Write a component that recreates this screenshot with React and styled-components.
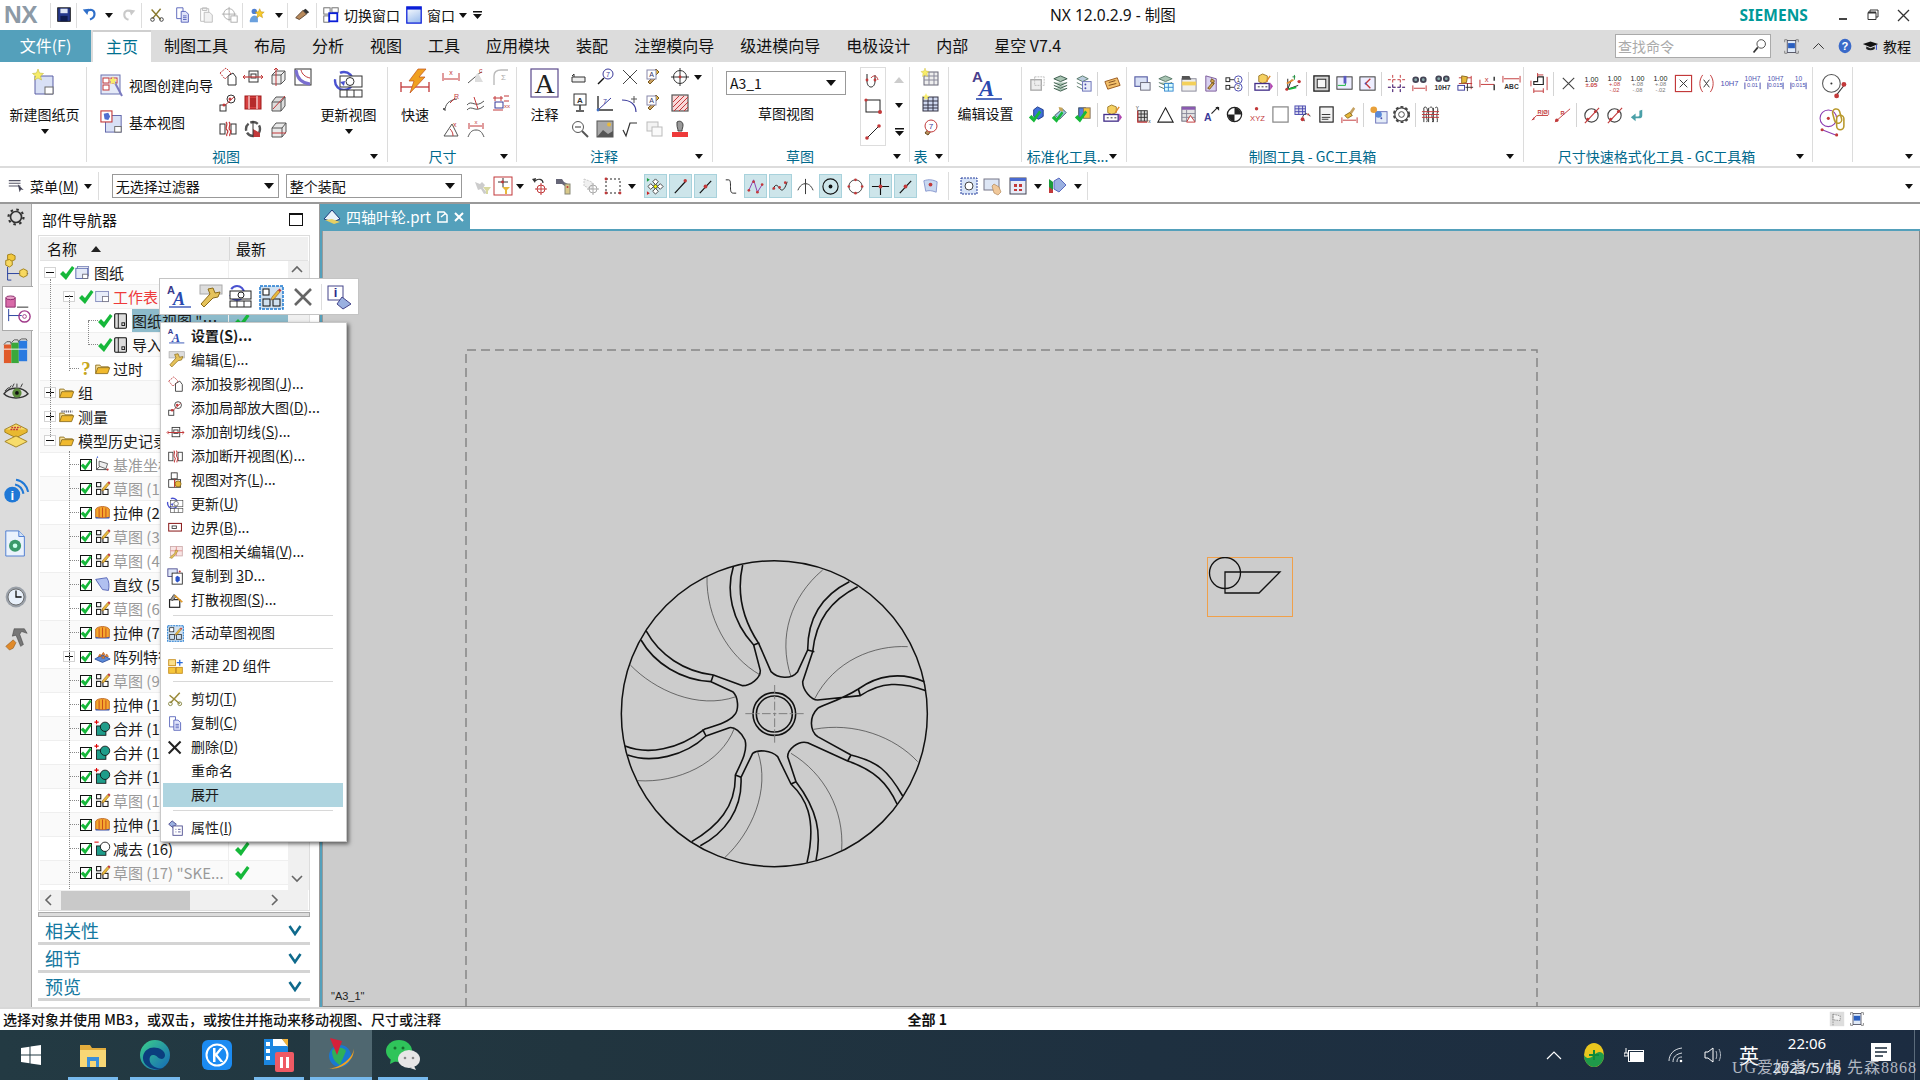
import React from 'react';
import styled, { createGlobalStyle } from 'styled-components';

const FONT = `"Noto Sans CJK SC","Noto Sans",sans-serif`;
const Global = createGlobalStyle`
  html,body{margin:0;padding:0;background:#fff;}
  body{font-family:${FONT};color:#111;font-size:14px;overflow:hidden;}
  #root{width:1920px;height:1080px;}
  *{box-sizing:border-box;}
`;

const R = '#c2393a', B = '#4b4fb0', K = '#333', BL = '#3f6fc4', Y = '#e8b93a', GN = '#16b83a', TL = '#1f9d8a', OR = '#e5892b';
const Tx = ({ x, y, s = 6, c = R, b, t, a = 'start', f = 'Liberation Sans', i }) => (
  <text x={x} y={y} fontSize={s} fill={c} fontWeight={b ? 700 : 400} textAnchor={a} fontFamily={f} fontStyle={i ? 'italic' : 'normal'}>{t}</text>
);
const L = ({ d, c = K, w = 1, f = 'none' }) => <path d={d} stroke={c} strokeWidth={w} fill={f} />;
const Dot = ({ x, y, r = 1.4, c = R }) => <circle cx={x} cy={y} r={r} fill={c} />;
const Tick = ({ x = 0, y = 0, k = 1 }) => <path transform={`translate(${x} ${y}) scale(${k})`} d="M1 9l3-3 3 3 6-8 2.500 2-8.500 12z" fill={GN} />;
const Pencil = ({ x = 0, y = 0 }) => <g transform={`translate(${x} ${y})`}><path d="M1 9l6-7 2 2-6 7-3 1z" fill={Y} stroke="#8a5a20" strokeWidth=".6" /><path d="M7 2l1.5-1.5 2 2L9 4z" fill={R} /></g>;
const Folder = ({ extra }) => <g><path d="M2 16V6h5l1.5 2H17v2" stroke="#8a6a1a" fill="#f7e3a0" /><path d="M2 16l2.5-7h14l-2.5 7z" fill="#f0b92e" stroke="#8a6a1a" />{extra}</g>;
const Sketch = () => <g><rect x="3" y="3" width="5" height="5" stroke="#111" strokeWidth="1.2" fill="#fff" /><rect x="3" y="11" width="5" height="6" stroke="#111" strokeWidth="1.2" fill="#fff" /><rect x="10.5" y="11" width="6" height="6" stroke="#111" strokeWidth="1.2" fill="#fff" /><Pencil x="9" y="1" /></g>;

const num = (a, b, c = R) => <g><Tx x="10" y="8" a="middle" t={a} s={7.5} c="#222" /><Tx x="10" y="14" a="middle" t={b} s={6.5} c={c} b /></g>;
const tol = (a, b, d, c = R) => <g><Tx x="10" y="7" a="middle" t={a} s={7.5} c="#222" /><Tx x="10" y="13" a="middle" t={b} s={6} c={c} /><Tx x="10" y="18.500" a="middle" t={d} s={6} c={c} /></g>;
const fit = (a, b) => <g><Tx x="10" y="7" a="middle" t={a} s={7} c={B} /><Tx x="10" y="14" a="middle" t={b} s={6} c={B} /><L d="M2 9v7M18 9v7" c={B} /></g>;

const ICONS = {
  tick: <Tick k={1} />,
  t105: num('1.00', '±.05'),
  t108: tol('1.00', '+.08', '-.02'),
  t105g: tol('1.00', '+.08', '-.08', '#777'),
  t108g: tol('1.00', '+.08', '-.02', '#777'),
  t10h7: <Tx x="10" y="13" a="middle" t="10H7" s={8} c={B} />,
  t10h7b: fit('10H7', '0.01'),
  t10h7c: fit('10H7', '0.015'),
  t10b: fit('10', '0.015'),
  save: <g><rect x="3" y="2" width="14" height="15" fill="#26398c" stroke="#111" /><rect x="6" y="3" width="8" height="5" fill="#dfe6f5" /><rect x="6" y="11" width="8" height="6" fill="#0f1c50" /></g>,
  undo: <g><path d="M6 6c4-3 9-2 9 3 0 3-2 5-5 6" stroke="#2f6fc9" strokeWidth="2.4" /><path d="M2 4l7-1-2 7z" fill="#2f6fc9" /></g>,
  redo: <g><path d="M14 6c-4-3-9-2-9 3 0 3 2 5 5 6" stroke="#c9c9c9" strokeWidth="2.4" /><path d="M18 4l-7-1 2 7z" fill="#c9c9c9" /></g>,
  cut: <g><L d="M4 4l10 11M14 3L5 14" c="#8a7a30" w="1.6" /><circle cx="5" cy="15" r="2" stroke="#333" /><circle cx="15" cy="15" r="2" stroke="#333" /></g>,
  copy: <g><path d="M3 2h7v12H3z" fill="#fff" stroke="#5360b8" /><path d="M8 6h5l3 3v9H8z" fill="#dfe3fa" stroke="#5360b8" /><L d="M10 11h4M10 13h4M10 15h4" c="#5360b8" /></g>,
  paste: <g><path d="M4 3h9v14H4z" fill="#fff" stroke="#bbb" /><path d="M8 7h6l3 3v8H8z" fill="#f2f2f2" stroke="#bbb" /><L d="M6 2h5v3H6z" c="#bbb" /></g>,
  snap: <g><circle cx="9" cy="9" r="6" stroke="#aaa" /><L d="M9 1v16M1 9h16" c="#aaa" /><rect x="11" y="11" width="7" height="7" fill="#fff" stroke="#aaa" /></g>,
  star: <g><circle cx="7" cy="6" r="3" fill="#4f7fd0" /><path d="M2 16c1-6 7-7 9-3v5H2z" fill="#6aa0dd" /><path d="M13 3l1.5 3.5 3.5.3-2.7 2.4.9 3.8-3.2-2-3.2 2 .9-3.8L8 6.800l3.500-.3z" fill="#f7c92a" stroke="#b98b10" strokeWidth=".5" /></g>,
  brush: <g><path d="M3 13l8-8 4 4-8 6z" fill="#b88a5c" stroke="#5a4028" /><path d="M11 5l3-2 4 4-3 2z" fill="#333" /></g>,
  switchWin: <g><rect x="2" y="2" width="7" height="7" stroke="#666" /><rect x="2" y="11" width="6" height="7" stroke="#666" /><rect x="11" y="2" width="7" height="5" stroke="#666" /><rect x="8" y="8" width="9" height="9" stroke="#0a1ed8" strokeWidth="2" fill="#fff" /></g>,
  winIcon: <g><rect x="2" y="1" width="16" height="18" stroke="#0a1ed8" strokeWidth="1.4" fill="url(#winG)" /><rect x="2" y="1" width="16" height="3" fill="#0a1ed8" /></g>,
  newSheet: <g><path d="M5 8h18v18H5z" fill="#d8e0f5" stroke="#5a5fa5" /><rect x="15" y="19" width="8" height="7" fill="#fff" stroke="#6a6a6a" /><path d="M8 1l1.500 4 4 .5-3 2.500 1 4-3.500-2-3.500 2 1-4-3-2.500 4-.5z" fill="#f6ec6a" stroke="#c5b93a" strokeWidth=".6" /></g>,
  wizard: <g><rect x="1" y="2" width="19" height="19" fill="#e4e9f7" stroke="#6a72b0" /><rect x="3" y="5" width="6" height="5" stroke={R} fill="#fff" /><rect x="11" y="5" width="6" height="5" stroke={R} fill="#fff" /><rect x="3" y="12" width="6" height="5" stroke={R} fill="#fff" /><path d="M14 8l8 15" stroke="#7a7ac0" strokeWidth="2" /><path d="M13 3l1 3 3 .5-2.200 2 .8 3-2.600-1.500-2.500 1.500.6-3-2.200-2 3-.5z" fill="#f7ec6a" /></g>,
  baseView: <g><rect x="6" y="6" width="17" height="18" fill="#d8e0f5" stroke="#5a5fa5" /><rect x="16" y="18" width="7" height="6" fill="#fff" stroke="#666" /><rect x="1" y="1" width="12" height="12" fill="#fff" stroke={R} strokeWidth="1.2" /><path d="M4 4l5-1 2 4-2 4-4-1z" fill="#4f6fd0" /></g>,
  projView: <g><path d="M2 6l6-5 5 5-6 6z" fill="#fff" stroke={R} strokeDasharray="2 1" /><path d="M10 9l5-3 3 4v8H10z" fill="#fff" stroke="#333" /></g>,
  sectLine: <g><rect x="6" y="4" width="9" height="11" fill="#fff" stroke="#333" /><rect x="8" y="7" width="5" height="4" stroke="#333" /><L d="M1 10h19" c={R} w="1.2" /><path d="M2 8l-2 2 2 2M18 8l2 2-2 2" stroke={R} /></g>,
  box3: <g><path d="M4 8h9v9H4zM4 8l4-4h9v9l-4 4M13 8l4-4" fill="#eee" stroke="#555" /><L d="M8 1v18" c={R} /><path d="M6 3l2-2 2 2" stroke={R} /></g>,
  gridBlue: <g><rect x="2" y="2" width="16" height="16" fill="#fff" stroke="#333" /><path d="M3 3c1 9 6 13 14 14" stroke="#7a6fd0" strokeWidth="3" fill="none" /><path d="M8 3c1 4 4 7 9 8" stroke={R} strokeWidth="1" /></g>,
  localV: <g><circle cx="13" cy="6" r="4" fill="#fff" stroke="#333" /><L d="M3 16L16 4" c={R} /><rect x="2" y="12" width="6" height="6" fill="#fff" stroke="#333" /><Dot x="12" y="6" r="1.500" /><Dot x="6" y="12" r="1.500" /></g>,
  redFilm: <g><rect x="2" y="3" width="16" height="13" fill="#d64040" stroke="#a01818" /><L d="M6 3v13M14 3v13" c="#fff" /><rect x="7" y="5" width="6" height="9" fill="#b52a2a" /></g>,
  box3b: <g><path d="M4 9h9v9H4zM4 9l4-5h9v9l-4 5M13 9l4-5" fill="#ddd" stroke="#555" /><path d="M5 16L17 3" stroke={R} /></g>,
  breakV: <g><rect x="2" y="5" width="5" height="10" fill="#fff" stroke="#333" /><rect x="13" y="5" width="5" height="10" fill="#fff" stroke="#333" /><path d="M8 3c3 3-2 6 1 8s-2 4 0 6M11 3c3 3-2 6 1 8s-2 4 0 6" stroke={R} strokeWidth="1.2" /></g>,
  revolve: <g><circle cx="10" cy="10" r="7" fill="none" stroke="#555" strokeWidth="2.4" strokeDasharray="8 2" /><path d="M10 10l7 4v4H10z" fill={R} /><L d="M10 2v16" /></g>,
  box3c: <g><path d="M4 9h10v9H4zM4 9l4-5h10v9l-4 5M14 9l4-5" fill="#eaeaea" stroke="#555" /><L d="M4 14h14" c={R} /></g>,
  update: <g><circle cx="10" cy="13" r="9" stroke="#4a52d0" strokeWidth="2.400" strokeDasharray="30 8" /><rect x="6" y="8" width="22" height="11" fill="#fff" stroke="#333" /><circle cx="16" cy="13.500" r="4" fill="#fff" stroke="#333" /><rect x="6" y="22" width="22" height="7" fill="#fff" stroke="#333" /><L d="M13 22v7M20 22v7" /><path d="M6 14l4 4 1-5z" fill="#4a52d0" /></g>,
  quick: <g><L d="M1 19h28" c={R} w="1.300" /><L d="M1 14v10M29 14v10" c={R} w="1.300" /><path d="M18 1h8l-7 8h6L10 25l4-12H9z" fill="#f0a020" stroke="#c0501a" strokeWidth=".7" /></g>,
  dimX: <g><L d="M2 6v8M18 6v8M3 12h14" c={R} /><Tx x="10" y="8" a="middle" t="x" s={7} /></g>,
  conicC: <g><path d="M2 16l7-6c2-2 4-4 7-5" stroke="#555" /><path d="M9 12c0-3 1-5 3-6l5 9H9z" fill="#ddd" /><Tx x="13" y="6" t="c" s={7} /></g>,
  sumFrame: <g><path d="M3 18V9c0-4 3-6 7-6h7" stroke="#bbb" strokeWidth="1.400" /><Tx x="10" y="13" t="Σ" s={8} c="#aaa" /></g>,
  radial: <g><path d="M4 18c0-7 4-11 12-12" stroke="#555" /><L d="M9 10l5-5" c={R} /><Tx x="13" y="6" t="R" s={7} /><Dot x="3" y="16" r="1" c="#333" /></g>,
  curveD: <g><path d="M1 12c5-6 8 4 17-4M1 17c5-6 8 4 17-4" stroke="#555" /><L d="M8 4l4 12" c={R} /></g>,
  chain: <g><L d="M4 3v5M10 3v5M2 5h10" c={R} /><L d="M13 3h5M13 8h5" c={R} /><rect x="4" y="9" width="8" height="6" stroke="#3a3a9a" /><Tx x="13" y="15" t="xx" s={6} /><L d="M2 17h10" c={R} /></g>,
  angleD: <g><L d="M3 17h14L11 5z" c="#555" /><path d="M9 10c2 2 3 4 3 7" stroke={R} /><Tx x="12" y="8" t="x" s={7} /></g>,
  arcD: <g><L d="M3 4v6M17 4v6M4 7h12" c={R} /><path d="M2 18c2-5 4-7 8-7s6 2 8 7" stroke="#555" /><Tx x="10" y="5" a="middle" t="x" s={6} /></g>,
  bigA: <g><rect x="1" y="1" width="27" height="28" fill="#fff" stroke="#5b4a8c" strokeWidth="1.200" /><Tx x="14.500" y="25" a="middle" t="A" s={28} c="#222" f="Liberation Serif" /></g>,
  leader: <g><path d="M2 10h13v5H2z" fill="#eee" stroke="#333" /><L d="M2 9l2-2v3" /></g>,
  balloon: <g><circle cx="13" cy="7" r="5" fill="#fff" stroke="#3a3a9a" /><Tx x="13" y="9.500" a="middle" t="7" s={7} c="#3a3a9a" /><L d="M9 11L3 17" c="#111" w="1.400" /></g>,
  xThin: <L d="M3 3l14 14M17 3L3 17" c="#444" />,
  tool: <g><path d="M3 15l6-6 2 2-6 6z" fill="#c9a060" stroke="#7a5a20" /><path d="M8 5l3-3 3 3-3 3z" fill={Y} stroke="#7a5a20" /><rect x="2" y="3" width="9" height="9" fill="#fff" stroke="#88a" /><Tx x="6.500" y="10" a="middle" t="A" s={7} c="#336" /></g>,
  crossC: <g><circle cx="10" cy="10" r="6.500" stroke="#333" /><L d="M10 1v18M1 10h18" c="#333" /><Dot x="10" y="10" c={R} /></g>,
  aStand: <g><rect x="4" y="1" width="12" height="11" fill="#fff" stroke="#333" /><Tx x="10" y="9.500" a="middle" t="A" s={8} c="#333" b /><L d="M10 12v5M6 18h8" w="1.500" /></g>,
  angleT: <g><L d="M3 3v14h15" c="#333" w="1.400" /><path d="M3 17L16 5" stroke="#3a3a9a" /><Tx x="8" y="11" t="7" s={7} c="#3a3a9a" /><Dot x="3" y="17" c={BL} /></g>,
  curveT: <g><path d="M2 7c9 0 14 5 14 12" stroke="#3a3a9a" strokeWidth="1.200" /><L d="M14 3v7M11 6h6" c="#555" /></g>,
  zoomG: <g><circle cx="8" cy="8" r="5.500" stroke="#555" fill="#fff" /><L d="M5 8h6" /><L d="M12 12l6 6" c="#555" w="2" /></g>,
  imgT: <g><rect x="2" y="2" width="16" height="16" fill="#a9a9a9" stroke="#555" /><path d="M2 18l6-7 5 4 5-3v6z" fill="#555" /><circle cx="14" cy="5.500" r="2" fill={Y} /></g>,
  sqrtT: <L d="M3 11l3 6 4-13h7" c="#333" w="1.200" />,
  grayCopy: <g><rect x="2" y="3" width="11" height="9" stroke="#bbb" fill="#f3f3f3" /><rect x="7" y="8" width="10" height="9" stroke="#bbb" fill="#fafafa" /></g>,
  stamp: <g><path d="M7 3c3-2 6 0 6 3s-1 3-1 6H8c0-3-1-3-1-6z" fill="#999" stroke="#444" /><rect x="2" y="13" width="16" height="5" fill="#ee3a3a" /></g>,
  hatchR: <g><rect x="2" y="2" width="16" height="16" fill="#f9d8d8" stroke="#555" strokeWidth="1.200" /><path d="M3 9l6-6M3 14l11-11M4 18L18 4M9 18l9-9M14 18l4-4" stroke={R} /></g>,
  sketchSpline: <g><L d="M4 3v7c0 8 8 8 8 0V4" c="#222" /><Dot x="4" y="9" /><Dot x="12" y="9" /><path d="M8 7c2-3 6-3 7 2" stroke={R} /></g>,
  rectS: <g><rect x="3" y="4" width="14" height="12" stroke="#222" /><Dot x="17" y="16" r="2" /><Dot x="3" y="4" r="1.600" /></g>,
  lineS: <g><L d="M4 16L16 4" c="#222" /><Dot x="16" y="4" r="1.800" /><Dot x="4" y="16" r="1.800" /></g>,
  tableNew: <g><rect x="4" y="5" width="14" height="13" fill="#eee" stroke="#667" /><path d="M4 9h14M4 13h14M9 5v13M14 5v13" stroke="#889" /><path d="M5 1l1 3 3 .5-2 2 .5 3L5 8 2.500 9.500 3 6.500l-2-2 3-.5z" fill="#f7ec6a" stroke="#c9b93a" strokeWidth=".4" /></g>,
  tableN2: <g><rect x="3" y="4" width="15" height="14" fill="#cfd8f0" stroke="#334" /><path d="M3 8h15M3 12h15M3 15h15M8 4v14M13 4v14" stroke="#334" /><path d="M6 0l1 2.500 2.500.5-2 1.500.5 2.500L6 5.500 4 7l.5-2.500-2-1.500L5 2.500z" fill="#f7ec6a" /></g>,
  wrenchQ: <g><path d="M5 14l7-9 3 2-7 9z" fill="#b8905a" stroke="#6a4a20" /><circle cx="11" cy="7" r="6" fill="#fff" stroke={R} /><Tx x="11" y="10" a="middle" t="7" s={8} c="#3a3a9a" /></g>,
  aaBig: <g><Tx x="2" y="14" t="A" s={15} c="#4a3f8c" b /><Tx x="9" y="28" t="A" s={23} c="#2a4ab0" b i f="Liberation Serif" /><L d="M6 31h26" c="#2a4ab0" w="1.600" /></g>,
  grayNodes: <g><rect x="3" y="6" width="11" height="11" stroke="#aaa" strokeWidth="1.400" fill="#eee" /><rect x="7" y="3" width="10" height="9" stroke="#bbb" strokeDasharray="2 1" /></g>,
  stackG: <g><path d="M3 5l7-3 7 3-7 3zM3 9l7 3 7-3M3 12l7 3 7-3M3 15l7 3 7-3" stroke="#3a5a4a" fill="#a8c4b2" /></g>,
  stackDoc: <g><path d="M3 5l6-3 6 3-6 3zM3 9l6 3M3 13l6 3" stroke="#5a7a6a" fill="#bcd" /><rect x="9" y="8" width="9" height="10" fill="#e8ecf8" stroke="#6a72b8" /><Dot x="12" y="11" r="1" c={B} /><Dot x="12" y="15" r="1" c={B} /></g>,
  tag: <g><path d="M2 8l13-4 3 8-13 4z" fill="#f3c06a" stroke="#9a5a20" /><L d="M6 9l7-2M6 12l8-2" c="#7a4a20" /></g>,
  blueChk: <g><path d="M6 5l4-3 6 3v7l-5 3-5-3z" fill="#3f6fd8" stroke="#1f3a8a" /><Tick x="0" y="5" k=".9" /></g>,
  toolChk: <g><path d="M4 11l8-7 4 4-7 7z" fill="#9ac8e0" stroke="#456" /><path d="M8 2l4 1 1 4-4-1z" fill="#c6a55a" /><Tick x="0" y="6" k=".85" /></g>,
  yellowChk: <g><rect x="5" y="3" width="7" height="10" fill="#4f7fe0" stroke="#345" /><rect x="10" y="3" width="7" height="11" fill="#f3c23a" stroke="#876" /><Tick x="0" y="5" k=".9" /></g>,
  cubeBar: <g><path d="M5 2l4-2 5 2v6l-5 2-4-2z" fill="#f5d060" stroke="#a08030" /><rect x="1" y="10" width="15" height="7" fill="#fff" stroke="#44308a" strokeWidth="1.400" /><path d="M4 13.500h2M8 13.500h2M12 13.500h2" stroke="#333" /><path d="M17 9l3 4-3 4z" fill="#b044b0" /><L d="M13 8l4-6" c="#e08a2a" w="1.500" /></g>,
  winBox: <g><rect x="2" y="3" width="13" height="10" fill="#d8e0f5" stroke="#5a5fa5" strokeWidth="1.200" /><rect x="8" y="9" width="10" height="8" fill="#e8edf9" stroke="#6a6a7a" /></g>,
  stackT: <g><path d="M3 5l7-3 7 3-7 3zM3 9l7 3 7-3M3 13l7 3" stroke="#5a7a6a" fill="#a8c4b2" /><rect x="9" y="10" width="9" height="8" fill="#dff" stroke="#3a8ad0" /><L d="M9 14h9M13 10v8" c="#3a8ad0" /></g>,
  tableBin: <g><rect x="3" y="5" width="15" height="13" fill="#eee" stroke="#889" /><rect x="3" y="8" width="15" height="4" fill="#f3d05a" /><path d="M3 2h8l2 4H3z" fill="#555" /></g>,
  wrenchV: <g><path d="M4 2l11 3v13L4 18z" fill="#d8d0f0" stroke="#7a5a9a" /><path d="M6 15l5-6 2 1-5 6zM10 5l3 2-1 3-3-2z" fill="#d6a850" stroke="#7a5a20" /></g>,
  ballots: <g><rect x="1" y="4" width="4" height="4" stroke="#222" /><rect x="1" y="12" width="4" height="4" stroke="#222" /><L d="M5 6h5M5 14h5" /><circle cx="14" cy="6" r="4" fill="#fff" stroke="#4a4ab0" /><circle cx="14" cy="14" r="4" fill="#fff" stroke="#4a4ab0" /><Tx x="14" y="8" a="middle" t="1" s={6} c="#333" /><Tx x="14" y="16" a="middle" t="2" s={6} c="#333" /></g>,
  csysC: <g><L d="M5 16l11-4M5 16V5M5 16l4-10" c="#222" /><path d="M4 10l7-4" stroke={OR} strokeWidth="1.800" /><path d="M6 16l8-2" stroke={GN} strokeWidth="1.800" /><Dot x="4" y="16" r="1.600" /><Dot x="17" y="8" r="1.800" /><path d="M10 3h3M12 1v5" stroke="#1a8a3a" /></g>,
  frameH: <g><rect x="2" y="2" width="16" height="16" fill="#d6d6d6" stroke="#222" strokeWidth="1.400" /><rect x="5.500" y="5.500" width="9" height="9" fill="#f8f8f8" stroke="#222" /></g>,
  boxPin: <g><rect x="2" y="3" width="16" height="13" fill="#eef" stroke="#333" /><L d="M3 12h8v-4" c={GN} /><rect x="9" y="2" width="3" height="8" fill="#5a5ac0" /></g>,
  boxC: <g><rect x="2" y="3" width="16" height="14" fill="#eef" stroke="#333" /><path d="M13 5l-5 5 5 5" stroke={R} strokeWidth="1.400" /><Dot x="8" y="10" r="1" c={B} /></g>,
  gridDash: <g><path d="M6 1v18M14 1v18M1 6h18M1 14h18" stroke={R} strokeDasharray="3 2" /><path d="M1 14h18M6 11v8M14 11v8" stroke="#3a3a9a" strokeDasharray="3 2" /></g>,
  binoc: <g><circle cx="6" cy="6" r="3.500" fill="#445" /><circle cx="14" cy="6" r="3.500" fill="#445" /><circle cx="6" cy="6" r="1.500" fill="#8aa" /><circle cx="14" cy="6" r="1.500" fill="#8aa" /><L d="M3 12v6M17 12v6M4 15h12" c={R} /></g>,
  binoc10: <g><circle cx="6" cy="5" r="3.500" fill="#445" /><circle cx="14" cy="5" r="3.500" fill="#445" /><circle cx="6" cy="5" r="1.500" fill="#8aa" /><circle cx="14" cy="5" r="1.500" fill="#8aa" /><Tx x="10" y="17" a="middle" t="10H7" s={7} c="#333" b /></g>,
  dimYel: <g><path d="M3 4h13M16 2v14M3 10h14" stroke={R} /><path d="M6 2l6 1-1 6-5 1z" fill={Y} stroke="#8a6a20" /><rect x="2" y="12" width="7" height="5" fill="#fff" stroke="#3a3a9a" /><L d="M12 10v8M10 14h8" c="#333" /></g>,
  dimXb: <g><L d="M1 6v8M2 11h14" c={R} /><L d="M16 3v4M16 11v6" w="1.500" /><Tx x="8" y="8" a="middle" t="x" s={8} /></g>,
  dimABC: <g><L d="M1 2v7M19 2v7M2 5h16" c={R} /><Tx x="10" y="16" a="middle" t="ABC" s={7} c="#333" b /></g>,
  gridX: <g><rect x="5" y="6" width="10" height="11" fill="#ddd" stroke="#333" /><path d="M5 9.500h10M5 13h10M8.500 6v11M12 6v11" stroke="#333" /><L d="M5 6v12h10" c={R} w="1.200" /><Tx x="3" y="5" t="Y" s={5} c="#333" /><Tx x="16" y="19" t="x" s={5} c="#333" /></g>,
  tri: <L d="M10 3l8 15H2z" c="#222" w="1.200" />,
  tableTri: <g><rect x="3" y="2" width="14" height="15" fill="#e4e4e4" stroke="#667" /><rect x="3" y="2" width="14" height="3" fill="#8a5ab0" /><path d="M3 9h14M3 13h14M8 5v12" stroke="#889" /><path d="M12 11l5 7H8z" fill="#fff" stroke={R} /></g>,
  aArrow: <g><Tx x="2" y="17" t="A" s={11} c="#3a3a9a" b /><L d="M10 9l7-7" c="#222" w="1.200" /><path d="M14 2h4v4z" fill="#222" /></g>,
  half: <g><circle cx="10" cy="10" r="7.500" fill="#fff" stroke="#222" strokeWidth="1.300" /><path d="M10 3a7 7 0 0 1 7 7h-7zM10 17a7 7 0 0 1-7-7h7z" fill="#222" /></g>,
  xyz: <g><Dot x="9" y="4" r="1.800" /><Tx x="10" y="17" a="middle" t="XYZ" s={8} /></g>,
  square: <rect x="2" y="2" width="16" height="16" fill="#fff" stroke="#888" strokeWidth="1.300" />,
  tableDot: <g><rect x="1" y="1" width="11" height="9" fill="#dde" stroke="#4a4ab0" /><path d="M1 4h11M1 7h11M5 1v9M9 1v9" stroke="#4a4ab0" /><path d="M17 12a4 4 0 1 0-5 5" stroke="#333" strokeDasharray="3 1" /><Dot x="9" y="15" r="2" /><Dot x="15" y="10" r="1" /></g>,
  doc: <g><rect x="3" y="2" width="14" height="16" fill="#f4f4f4" stroke="#222" strokeWidth="1.200" /><L d="M5 10h9M5 13h9M5 15h7" /></g>,
  broom: <g><L d="M2 13v6M18 13v6M3 16h14" c={R} /><path d="M9 9l5-7 2 2-4 6z" fill="#c4a060" /><path d="M5 11l5-3 3 3-5 3z" fill={Y} stroke="#8a6a20" /></g>,
  gearsDoc: <g><rect x="7" y="7" width="12" height="12" fill="#e4ecf8" stroke="#6a72b8" /><circle cx="5" cy="5" r="3.500" fill="#e8a03a" /><circle cx="10" cy="10" r="3.500" fill="#5a8ad8" /><Dot x="13" y="14" c={B} r="1" /></g>,
  gear: <g><circle cx="10" cy="10" r="7" fill="#fff" stroke="#444" strokeWidth="1.200" /><circle cx="10" cy="10" r="8" fill="none" stroke="#444" strokeWidth="2" strokeDasharray="3 2.200" /><circle cx="10" cy="10" r="3" fill="#fff" stroke="#444" /></g>,
  hatchSlots: <g><path d="M3 3c3-3 5 3 3 6s2 7 0 9M9 3c3-3 5 3 3 6s2 7 0 9M15 3c3-3 3 3 2 6s1 7 0 9M3 3v15M8 3v15M13 3v15" stroke="#333" /><path d="M1 7h18M1 10h18M1 13h18" stroke={R} /></g>,
  stepDim: <g><L d="M8 3h6v8H4V8h4z" c="#222" w="1.200" /><L d="M8 1h6M8 -1v4" c={R} /><L d="M1 7v6M18 3v14M4 18h10M4 15v5M14 15v5" c={R} /></g>,
  xGray: <L d="M4 4l12 12M16 4L4 16" c="#444" w="1.200" />,
  xBoxR: <g><rect x="1.500" y="1.500" width="17" height="17" fill="#fff" stroke={R} strokeWidth="1.200" /><L d="M6 6l8 8M14 6l-8 8" c="#333" /></g>,
  xParen: <g><L d="M6 1c-4 5-4 13 0 18M14 1c4 5 4 13 0 18" c={R} /><L d="M7 6l6 8M13 6l-6 8" c="#333" /></g>,
  rDim: <g><L d="M2 16l5-5h12" c={R} /><path d="M2 16l2-3 1 2z" fill={R} /><Tx x="8" y="9" t="R|Ø|" s={6} c={R} b /></g>,
  r2Dim: <g><L d="M2 18L18 4" c={R} /><Dot x="4" y="16" r="1.800" /><Tx x="8" y="11" t="R" s={6} c={R} b /></g>,
  diamR: <g><circle cx="10" cy="11" r="7" fill="#fff" stroke="#444" strokeWidth="1.200" /><L d="M3 19L18 3" c={R} w="1.200" /><Dot x="6" y="15" r="1.500" /><Dot x="14" y="7" r="1.500" /></g>,
  returnT: <path d="M15 5v6c0 2-1 3-4 3H8v3l-5-4 5-4v3h2c1 0 2 0 2-1V6z" fill="#4aa0a8" />,
  circleLine: <g><circle cx="10" cy="10" r="8.500" fill="#fff" stroke="#555" /><Dot x="10" y="10" r="1" c="#333" /><L d="M15 21l7-9" c="#333" /><Dot x="22" y="11" r="2.300" /><Dot x="15" y="22" r="2.300" /></g>,
  chainLink: <g><circle cx="9" cy="9" r="8" fill="#fff" stroke="#8a3ab0" /><Dot x="9" y="9" r="1.500" /><rect x="14" y="0" width="7" height="14" rx="3.500" stroke="#b8982a" strokeWidth="1.500" transform="rotate(-15 17 7)" /><rect x="17" y="6" width="7" height="14" rx="3.500" stroke="#b8982a" strokeWidth="1.500" /><L d="M3 20l13 5" c="#8a3ab0" /><Dot x="3" y="20" r="1.500" /><Dot x="17" y="25" r="1.500" /></g>,
  searchG: <g><circle cx="12" cy="7" r="5" stroke="#333" /><L d="M8 11l-5 6" c="#333" w="2" /></g>,
  fitIcon: <g><path d="M2 5V2h3M15 2h3v3M2 15v3h3M15 18h3v-3" stroke="#777" /><rect x="5" y="3" width="10" height="14" fill="#e0eaf7" stroke="#445" /><rect x="6" y="6" width="8" height="6" fill="#2a5fc0" /></g>,
  chevUp: <path d="M3 13l7-7 7 7" stroke="#333" strokeWidth="1.300" fill="none" />,
  help: <g><ellipse cx="10" cy="10" rx="8" ry="9" fill="#3a6ac9" /><Tx x="10" y="15" a="middle" t="?" s={14} c="#fff" b /></g>,
  hat: <g><path d="M1 7l9-3 9 3-9 4z" fill="#111" /><path d="M5 10v3c3 2 7 2 10 0v-3l-5 2z" fill="#222" /><L d="M17 8v6" c="#1a3ad0" /></g>,
  wrenchGray: <g><path d="M3 6l5 2 2-2 3 3-2 3 4 5-3 1-3-5-3 1z" fill="#ccc" /><path d="M11 11h8l-3 4v3h-2v-3z" fill="#d8d8a0" /></g>,
  boxFilter: <g><rect x="1" y="1" width="18" height="18" fill="#fff" stroke={R} /><L d="M10 2v9M5 6h10" c="#333" /><Dot x="9.500" y="6" /><path d="M9 11h8l-3 3v4h-2v-4z" fill={Y} /></g>,
  undoTarget: <g><path d="M5 5c3-3 8-2 8 2" stroke="#333" strokeWidth="1.200" /><path d="M2 3l4-1-1 5z" fill="#333" /><circle cx="11" cy="13" r="4" stroke={R} /><L d="M11 7v12M5 13h12" c={R} /></g>,
  robot: <g><path d="M2 3h6l2 3 4 2-2 3-4-3H2z" fill="#667" /><rect x="11" y="8" width="5" height="10" fill="#d8c88a" stroke="#887" /><Dot x="13.500" y="11" r="1" /></g>,
  grayTgt: <g><path d="M4 3l8 3v7l-8-3z" fill="#f0f0f0" stroke="#ccc" strokeDasharray="2 1" /><circle cx="13" cy="13" r="4" stroke="#aaa" /><L d="M13 7v12M7 13h12" c="#aaa" /></g>,
  dashBox: <g><rect x="3" y="3" width="14" height="14" stroke="#222" strokeDasharray="2 2" /><Dot x="3" y="3" /><Dot x="17" y="17" /><Dot x="3" y="17" /></g>,
  menuIc: <g><L d="M2 4h13M2 7h13M2 10h13" c="#556" w="1.200" /><path d="M12 8l2 9 1.500-3 3 .5z" fill="#445" /></g>,
  hSnap: <g><path d="M10 2l3 3-3 3-3-3zM10 12l3 3-3 3-3-3zM2 10l3-3 3 3-3 3zM12 10l3-3 3 3-3 3z" fill="#fff" stroke="#444" /><circle cx="10" cy="10" r="2" fill="#ff0" stroke="#444" /><path d="M1 1l3 2-3 2z" fill="#1a9a3a" /><path d="M1 15l3 2-3 2z" fill="#c22" /></g>,
  hLine1: <g><L d="M4 17L15 5" c="#111" w="1.200" /><Dot x="15" y="4" r="1.800" /></g>,
  hLine2: <g><L d="M4 17L16 4" c="#111" w="1.200" /><Dot x="10" y="10" r="2" /></g>,
  sLine: <path d="M5 3h3c2 0 2 3 2 7s0 7 3 7h3" stroke="#222" fill="none" />,
  polyS: <g><path d="M3 14L8 3l4 13 5-8" stroke="#8a3ab0" /><Dot x="3" y="14" /><Dot x="8" y="5" /><Dot x="12" y="16" /><Dot x="17" y="8" /></g>,
  splineS: <g><path d="M2 13c3-7 5-4 7-1s5 3 8-7" stroke="#222" /><Dot x="3" y="12" /><Dot x="9" y="11" /><Dot x="15" y="6" /></g>,
  arcTop: <g><path d="M2 14c2-5 5-7 8-7s6 2 8 7" stroke="#333" /><L d="M10 2v16" c="#333" /><Dot x="10" y="7" c="#444" r="1" /></g>,
  targ: <g><circle cx="10" cy="10" r="8" stroke="#111" strokeWidth="1.200" /><Dot x="10" y="10" c="#111" r="2" /></g>,
  ringS: <g><circle cx="10" cy="10" r="7" stroke="#444" /><Dot x="10" y="3" /><Dot x="10" y="17" /><Dot x="3" y="10" /><Dot x="17" y="10" /></g>,
  plusS: <g><L d="M10 1v18M1 10h18" c="#111" w="1.200" /><Dot x="10" y="10" r="2" /></g>,
  surfS: <g><path d="M3 4c5-2 10-1 14 1l-1 11c-5-2-8-2-11-1z" fill="#c8d8f0" stroke="#8a9ad0" /><Dot x="10" y="8" r="2" /></g>,
  zoomDash: <g><rect x="2" y="2" width="16" height="16" fill="#d8e4f8" stroke="#223a9a" strokeDasharray="2 1" /><circle cx="10" cy="10" r="4" stroke="#444" fill="#fff" /></g>,
  handPan: <g><rect x="1" y="3" width="15" height="11" fill="#dde6f5" stroke="#778" /><path d="M9 10l2-2 5 3 2 5-3 3-4-2z" fill="#f0c89a" stroke="#a87a4a" strokeWidth=".6" /></g>,
  gridRed: <g><rect x="2" y="2" width="16" height="16" fill="#e8ecf8" stroke="#445" /><rect x="2" y="2" width="16" height="3" fill="#4a6ad0" /><path d="M6 8h3v3H6zM11 8h3v3h-3zM6 13h3v2H6zM11 13h3v2h-3z" fill={R} /></g>,
  movieA: <g><path d="M2 3l4 3v8l-4 3z" fill="#1a9a3a" /><path d="M2 11l4 3v3H2z" fill={R} /><path d="M7 5l5-3 7 7-7 7-5-3z" fill="#9ab0e0" stroke="#5a6ac0" /></g>,
  cog: <g><circle cx="10" cy="10" r="5.500" fill="none" stroke="#333" strokeWidth="1.700" /><circle cx="10" cy="10" r="7.500" fill="none" stroke="#333" strokeWidth="2.200" strokeDasharray="2.500 3.400" /></g>,
  railAsm: <g><path d="M6 2l4-1 4 2v4l-4 2-4-2z" fill="#f2c83c" stroke="#a0801a" /><path d="M4 8l4-1 3 2v4l-3 2-4-2z" fill="#f7d860" stroke="#a0801a" /><L d="M6 15v14M6 22h22M6 29h4" c="#1f3a9a" /><path d="M19 19l4-2 4 2v5l-4 2-4-2z" fill="#f7d860" stroke="#a0801a" /></g>,
  railPart: <g><path d="M2 3h10v10H2z" fill="#d86aa8" stroke="#8a2a6a" /><ellipse cx="7" cy="3" rx="5" ry="2" fill="#e8a0c8" stroke="#8a2a6a" /><L d="M5 15v13M5 22h14" c="#1f3a9a" /><L d="M14 13h12" c="#222" /><circle cx="22" cy="23" r="6" stroke="#a03a8a" strokeWidth="1.500" /><circle cx="22" cy="23" r="2" stroke="#a03a8a" /></g>,
  railLib: <g><rect x="1" y="7" width="8" height="20" fill="#e05a2a" /><rect x="9" y="5" width="8" height="22" fill="#3aa83a" /><rect x="17" y="3" width="9" height="22" fill="#2a7ae0" /><path d="M1 7l3-3h4l1 3M9 5l3-3h4l1 3M17 3l3-2h5l1 2" stroke="#555" /><L d="M1 12h25" c="#fff" /></g>,
  railEye: <g><path d="M1 16c6-8 20-8 26 0-6 6-20 6-26 0z" fill="#ddd" stroke="#333" strokeWidth="1.500" /><circle cx="15" cy="15" r="5" fill="#5a8a3a" /><circle cx="15" cy="15" r="2" fill="#111" /><path d="M2 13l4-4M6 11l3-4M10 9l2-4M15 9V5M19 9l2-4" stroke="#333" /></g>,
  railLayer: <g><path d="M14 2L26 8 14 14 2 8z" fill="#f7dc6a" stroke="#a08020" /><path d="M2 8v3l12 6 12-6V8" fill="#e8b830" stroke="#a08020" /><path d="M14 15l12 6-12 6-12-6z" fill="#f7dc6a" stroke="#a08020" /><path d="M9 6h10M8 8h8" stroke={R} strokeWidth="1.600" strokeDasharray="2 1" /></g>,
  railInfo: <g><circle cx="11" cy="20" r="8.500" fill="#1f78d6" /><Tx x="11" y="25.500" a="middle" t="i" s={14} c="#fff" b /><path d="M14 9c5 1 8 5 9 10M15 4c7 1 12 7 13 13" stroke="#1f78d6" strokeWidth="2.200" /></g>,
  railWeb: <g><path d="M3 1h14l6 6v21H3z" fill="#eaf2fc" stroke="#4a7ad0" /><path d="M17 1v6h6" fill="#cfe0f5" stroke="#4a7ad0" /><circle cx="13" cy="17" r="6.500" fill="#3a9a6a" /><circle cx="13" cy="17" r="2.500" fill="#cfe" /></g>,
  railClock: <g><circle cx="15" cy="15" r="13" fill="#9aa0a8" /><circle cx="15" cy="15" r="10" fill="#e8f0fa" stroke="#555" /><L d="M15 7v8h7" c="#111" w="1.600" /></g>,
  railTools: <g><path d="M12 4h11l3 5-6-2-2 3 4 11-3 2-5-12-4 1z" fill="#777" stroke="#333" strokeWidth=".5" /><path d="M3 23l8-7 3 3-3 6-4 2z" fill="#e08a2a" stroke="#7a4a1a" strokeWidth=".5" /></g>,
  sheetT: <g><rect x="3" y="3" width="13" height="11" fill="#fff" stroke="#7a84b8" /><rect x="1" y="5" width="14" height="12" fill="#e4e9f7" stroke="#4a5aa8" /><rect x="9" y="12" width="6" height="5" fill="#fff" stroke="#667" /></g>,
  sheetS: <g><rect x="2" y="4" width="15" height="12" fill="#e8edf9" stroke="#7a84b8" /><rect x="10" y="10" width="7" height="6" fill="#fff" stroke="#778" /></g>,
  viewT: <g><rect x="3" y="2" width="13" height="16" rx="1" fill="#ddd" stroke="#111" strokeWidth="1.200" /><L d="M7 2v16" c="#111" /><rect x="11" y="12" width="3" height="3" stroke="#111" /></g>,
  question: <Tx x="10" y="17" a="middle" t="?" s={21} c="#c6a61a" b f="Liberation Serif" />,
  folder: <Folder />,
  folderR: <Folder extra={<path d="M4 4h13" stroke="#667" strokeWidth="2.400" strokeDasharray="1.500 1" />} />,
  csysT: <g><L d="M3 3v13h13M3 16l7-7" c="#333" /><path d="M6 6l10 3-2 6-8-3z" fill="#eee" stroke="#555" /><path d="M3 2l1-2 1 2z" fill="#2a4ad0" /><Dot x="16" y="16" r="1.300" /></g>,
  skT: <Sketch />,
  extT: <g><path d="M2 16V6c3-4 13-4 16 0v10z" fill="#f5a82e" stroke="#b85a14" /><path d="M6 5v11M10 4v12M14 5v11" stroke="#c8501a" strokeWidth="1.200" /><path d="M2 15c5 2 11 2 16 0v2H2z" fill="#3a5ab8" /></g>,
  ruledT: <path d="M2 4l13-2c3 4 3 10 2 15l-7-1z" fill="#b0c0f0" stroke="#4a5ab0" />,
  patT: <g><path d="M1 13l9-5 9 5-9 4z" fill="#5a8ad8" stroke="#2a4a98" /><path d="M5 10l2-3 2 3zM9 8l2-3 2 3zM13 10l2-3 2 3zM9 12l2-3 2 3z" fill="#f0882a" stroke="#a04a10" strokeWidth=".6" /></g>,
  uniT: <g><rect x="3" y="7" width="11" height="11" fill={TL} stroke="#111" /><circle cx="13" cy="8" r="5.500" fill={TL} stroke="#111" /><L d="M3 0v5M.5 2.500h5" c="#d00" w="1.200" /></g>,
  subT: <g><rect x="3" y="7" width="11" height="11" fill={TL} stroke="#111" /><circle cx="13" cy="8" r="5.500" fill="#fff" stroke="#111" /><L d="M.5 2.500h5" c="#d00" w="1.200" /></g>,
  miniAA: <g><Tx x="1" y="10" t="A" s={11} c="#3a3a8a" b /><Tx x="7" y="21" t="A" s={18} c="#2a4ab0" b i f="Liberation Serif" /><L d="M3 23h22" c="#2a4ab0" w="1.300" /></g>,
  miniWr: <g><rect x="3" y="1" width="22" height="9" fill="#ddd" stroke="#aaa" /><path d="M4 20l9-10-2-5 5-1 2 5 5-1-2 5-5 1-9 9z" fill="#e5c25a" stroke="#8a6a1a" /></g>,
  miniUp: <g><circle cx="9" cy="9" r="7" stroke="#4a52d0" strokeWidth="2" strokeDasharray="20 6" /><rect x="2" y="7" width="21" height="8" fill="#fff" stroke="#222" /><circle cx="13" cy="11" r="3" fill="#fff" stroke="#222" /><rect x="2" y="17" width="21" height="6" fill="#fff" stroke="#222" /><L d="M9 17v6M16 17v6" /></g>,
  miniAct: <g><rect x="1" y="1" width="23" height="23" fill="#cfe0f0" stroke="#1f7ad0" strokeWidth="1.500" strokeDasharray="3 1" /><rect x="4" y="4" width="6" height="6" stroke="#111" fill="#fff" /><rect x="4" y="14" width="7" height="7" stroke="#111" fill="#cfe0f0" /><rect x="14" y="14" width="7" height="7" stroke="#111" fill="#cfe0f0" /><Pencil x="12" y="3" /></g>,
  miniX: <L d="M4 4l16 16M20 4L4 20" c="#666" w="2.600" />,
  miniInfo: <g><rect x="1" y="1" width="15" height="14" fill="#fff" stroke="#44448a" /><Tx x="8.500" y="12" a="middle" t="i" s={13} c="#2a2a8a" b /><path d="M15 12l9 7-8 5-6-5z" fill="#9ab0e0" stroke="#44448a" /></g>,
  menuX: <L d="M2 3l14 14M16 3L2 17" c="#222" w="2.400" />,
  boundary: <g><rect x="2" y="4" width="15" height="9" fill="#fff" stroke="#8a1a1a" strokeWidth="1.200" /><rect x="6" y="7" width="5" height="3" stroke="#333" /></g>,
  editAssoc: <g><rect x="4" y="3" width="14" height="11" fill="#f8e4e4" stroke="#caa" /><path d="M4 8h14M11 3v11" stroke="#d88" /><path d="M3 16l6-5 1-4 3 1-2 3-5 6z" fill="#e5c25a" stroke="#8a6a1a" strokeWidth=".5" /></g>,
  copy3d: <g><rect x="1" y="1" width="11" height="9" fill="#dfe6f7" stroke="#44448a" /><rect x="6" y="6" width="12" height="13" fill="#fff" stroke="#222" /><path d="M10 11l2-2 3 2v4l-3 2-2-2z" fill="#2a52c8" /><Dot x="15" y="4" r="1.200" /></g>,
  expl: <g><rect x="3" y="9" width="12" height="9" fill="#fff" stroke="#222" strokeWidth="1.400" /><path d="M4 9l4-6 3 2-4 5z" fill="#999" stroke="#444" /><path d="M9 4l9 8" stroke="#e09a2a" strokeWidth="2" /></g>,
  newComp: <g><rect x="2" y="2" width="8" height="7" fill="#fbe08a" stroke="#c48a18" /><rect x="2" y="11" width="8" height="7" fill="#f6c63c" stroke="#c48a18" /><rect x="11" y="11" width="7" height="7" fill="#f6c63c" stroke="#c48a18" /><L d="M15 2v7M11.500 5.500h7" c="#2a6ad8" w="1.500" /></g>,
  alignV: <g><rect x="2" y="9" width="14" height="9" fill="#fff" stroke="#333" /><L d="M9 1v17" c={R} w="1.500" /><rect x="5" y="1" width="7" height="7" fill="#fff" stroke="#333" /><circle cx="13" cy="14" r="3.500" fill={Y} stroke="#8a6a1a" /></g>,
  miniCut: <g><L d="M3 5l12 10M15 2L4 14" c="#9a8a3a" w="1.800" /><circle cx="4" cy="15" r="2.200" stroke="#7a7a30" /><circle cx="15" cy="15" r="2.200" stroke="#7a7a30" /></g>,
  props: <g><path d="M2 5l4-4 5 4-4 4z" fill="#9ab0e0" stroke="#44448a" /><rect x="7" y="7" width="11" height="11" fill="#fff" stroke="#44448a" /><path d="M10 11h1M10 14h1M13 11h3M13 14h3" stroke="#44448a" /></g>,
  flagTile: <g><rect x="1" y="1" width="18" height="18" fill="#ddd" /><path d="M5 4l9 2v6l-9-1zM5 4v14" stroke="#888" fill="#f4f4f4" strokeDasharray="2 1" /></g>,
};
ICONS.stepDim2 = ICONS.rDim;

const Ico = ({ n, s = 20, v = 20 }) => <svg width={s} height={s} viewBox={`0 0 ${v} ${v}`} fill="none" style={{ display: 'block', overflow: 'visible' }}>{ICONS[n]}</svg>;

/* ---------- frame ---------- */
const Root = styled.div`position:relative;width:1920px;height:1080px;overflow:hidden;display:flex;flex-direction:column;background:#fff;`;

/* title bar */
const TitleBar = styled.div`height:30px;display:flex;align-items:center;background:#fff;flex:none;position:relative;`;
const Logo = styled.div`width:50px;padding-left:4px;font:700 24.5px/30px "Liberation Sans",sans-serif;color:#8d9aa6;letter-spacing:-.5px;`;
const QSlot = styled.div`width:${p => p.$w}px;height:22px;display:flex;align-items:center;justify-content:center;flex:none;`;
const QSep = styled.div`width:1px;height:25px;background:#ddd;flex:none;`;
const Tri = styled.span`display:inline-block;width:0;height:0;border-left:${p => p.$s || 4}px solid transparent;border-right:${p => p.$s || 4}px solid transparent;border-top:${p => (p.$s || 4) + 1}px solid ${p => p.$c || '#111'};flex:none;`;
const UpTri = styled.span`display:inline-block;width:0;height:0;border-left:5px solid transparent;border-right:5px solid transparent;border-bottom:6px solid ${p => p.$c || '#111'};`;
const QLabel = styled.span`font-size:14px;line-height:20px;color:#111;white-space:nowrap;flex:none;`;
const Title = styled.div`position:absolute;left:1050px;top:5px;font-size:15.500px;line-height:20px;color:#111;white-space:nowrap;font-family:"Noto Sans","Noto Sans CJK SC",sans-serif;`;
const TitleRight = styled.div`margin-left:auto;display:flex;align-items:center;`;
const Siemens = styled.div`font:700 15.500px/20px "Noto Sans","Liberation Sans",sans-serif;color:#009999;margin-right:20px;letter-spacing:.1px;`;
const WinBtn = styled.div`width:30px;height:24px;display:flex;align-items:center;justify-content:center;`;

/* tab bar */
const TabBar = styled.div`height:32px;background:#dcdcdc;display:flex;align-items:stretch;flex:none;`;
const FileTab = styled.div`width:91px;background:#54a0bb;color:#fff;font-size:16px;line-height:30px;text-align:center;margin-right:2px;`;
const Tab = styled.div`padding:0 13px;font-size:16px;line-height:31px;color:${p => p.$on ? '#00708f' : '#111'};background:${p => p.$on ? '#fff' : 'transparent'};white-space:nowrap;${p => p.$on ? 'border-top:2px solid #cfcfcf;line-height:29px;' : ''}`;
const TabRight = styled.div`margin-left:auto;display:flex;align-items:center;padding-right:9px;`;
const Search = styled.div`width:156px;height:24px;background:#fff;border:1px solid #aaa;display:flex;align-items:center;justify-content:space-between;color:#aaa;font-size:14px;padding:0 2px;margin-right:8px;`;
const TutLabel = styled.span`font-size:14px;`;

/* ribbon */
const Ribbon = styled.div`height:106px;display:flex;background:#fff;border-bottom:2px solid #dcdcdc;flex:none;`;
const Group = styled.div`position:relative;width:${p => p.$w}px;flex:none;display:flex;flex-direction:column;
  ${p => p.$nosep ? '' : `&::after{content:"";position:absolute;right:0;top:5px;bottom:4px;width:1px;background:#dcdcdc;}`}`;
const Body = styled.div`height:86px;display:flex;padding-left:${p => p.$pl || 0}px;flex:none;`;
const LabelRow = styled.div`height:16px;display:grid;grid-template-columns:1fr auto 1fr;align-items:center;padding-right:${p => p.$shift || 0}px;`;
const GroupLabel = styled.div`grid-column:2;font-size:14px;line-height:16px;color:#00698c;white-space:nowrap;`;
const LabelDD = styled.div`grid-column:3;justify-self:end;margin-right:${p => p.$mr}px;display:flex;`;
const Big = styled.div`width:${p => p.$w}px;padding-top:6px;display:flex;flex-direction:column;align-items:center;flex:none;margin-left:${p => p.$ml || 0}px;`;
const BigIcon = styled.div`height:30px;`;
const BigText = styled.div`font-size:14px;line-height:18px;margin-top:${p => p.$mt ?? 7}px;white-space:nowrap;`;
const BigDD = styled.div`margin-top:5px;line-height:0;`;
const Stack = styled.div`display:flex;flex-direction:column;padding-top:4px;width:128.500px;padding-left:13px;flex:none;`;
const WizRow = styled.div`height:37px;display:flex;align-items:center;gap:6px;font-size:14px;white-space:nowrap;`;
const Grid3 = styled.div`display:grid;grid-template-columns:repeat(${p => p.$c},25px);grid-auto-rows:26px;padding-top:2px;align-content:start;flex:none;`;
const Cell = styled.div`display:flex;align-items:center;justify-content:center;`;
const DDCell = styled(Cell)`height:26px;margin:2px 0 0 2px;`;
const TwoRows = styled.div`padding:6px 0 0 4px;display:flex;flex-direction:column;`;
const IconRow = styled.div`height:31px;display:flex;align-items:center;`;
const Slot23 = styled.div`width:23px;height:22px;display:flex;align-items:center;justify-content:center;flex:none;`;
const VSep = styled.div`width:6px;height:22px;flex:none;position:relative;&::after{content:"";position:absolute;left:2px;top:-1px;bottom:-1px;width:1px;background:#d4d4d4;}`;
const Combo = styled.div`width:${p => p.$w}px;height:${p => p.$h || 24}px;margin-left:${p => p.$ml || 0}px;border:1px solid #999;background:#fff;display:flex;align-items:center;justify-content:space-between;padding:0 ${p => p.$pr || 6}px 0 3px;font-size:14px;white-space:nowrap;flex:none;`;
const SketchCol = styled.div`width:120px;margin-left:13px;padding-top:9px;display:flex;flex-direction:column;align-items:center;flex:none;`;
const SketchBox = styled.div`width:26px;height:79px;margin:5px 0 0 14px;border:1px solid #ddd;display:flex;flex-direction:column;align-items:center;justify-content:space-around;flex:none;`;
const SideArrows = styled.div`width:22px;height:79px;margin-top:5px;display:flex;flex-direction:column;align-items:center;justify-content:space-around;padding-left:4px;`;
const Col3 = styled.div`width:100%;padding-top:2px;display:grid;grid-auto-rows:26px;justify-items:center;align-items:center;`;
const RightCol = styled.div`width:100%;padding-top:11px;display:flex;flex-direction:column;align-items:center;gap:11px;`;

/* selection bar */
const SelBar = styled.div`height:36px;display:flex;align-items:center;padding:2px 0 0 7px;flex:none;border-bottom:2px solid #999;`;
const SelLabel = styled.span`font-size:14px;margin:0 5px;white-space:nowrap;`;
const BarSep = styled.div`width:1px;height:28px;background:#ddd;margin:0 ${p => p.$mr || 0}px 0 ${p => p.$ml || 0}px;flex:none;`;
const BarSlot = styled.div`width:${p => p.$w}px;height:24px;display:flex;align-items:center;justify-content:center;flex:none;
  ${p => p.$hl ? `&>div{width:23px;height:24px;background:#cde5ea;border:1px solid #a8d2dc;display:flex;align-items:center;justify-content:center;}` : '&>div{display:flex;}'}`;
const BarEnd = styled.div`margin-left:auto;margin-right:7px;display:flex;`;

/* main */
const Main = styled.div`flex:1;min-height:0;display:flex;`;
const Rail = styled.div`width:32px;background:#dcdcdc;border-right:1px solid #aaa;display:flex;flex-direction:column;align-items:center;flex:none;position:relative;z-index:1;`;
const RailItem = styled.div`width:${p => p.$on ? 30 : 32}px;height:${p => p.$h}px;margin-top:${p => p.$mt}px;display:flex;align-items:center;justify-content:center;flex:none;
  ${p => p.$on ? 'background:#fff;border:1px solid #aaa;border-right:0;margin-left:2px;margin-right:-1px;width:31px;' : ''}`;
const Panel = styled.div`width:287px;background:#fff;display:flex;flex-direction:column;flex:none;`;
const PanelHead = styled.div`height:31px;display:flex;align-items:center;justify-content:space-between;padding:0 16px 0 10px;font-size:15px;`;
const MaxBox = styled.div`width:14px;height:13px;border:1px solid #111;border-top-width:2px;`;
const TreeBox = styled.div`margin:0 9px 0 6px;height:676px;border:1px solid #ddd;padding:1px;display:flex;flex-direction:column;flex:none;`;
const TreeHead = styled.div`height:24px;background:#f0f0f0;display:flex;font-size:15px;flex:none;border-bottom:1px solid #e2e2e2;`;
const HeadCell = styled.div`width:${p => p.$w}px;display:flex;align-items:center;padding-left:${p => p.$pl}px;gap:14px;${p => p.$line ? 'border-right:1px solid #d8d8d8;' : ''}line-height:20px;flex:none;`;
const TreeMid = styled.div`display:flex;height:629px;flex:none;`;
const Rows = styled.div`position:relative;width:248px;flex:none;overflow:hidden;`;
const VScroll = styled.div`width:21px;background:#f0f0f0;display:flex;flex-direction:column;align-items:center;justify-content:space-between;padding:2px 3px 5px 0;flex:none;`;
const Row = styled.div`height:24px;display:flex;background:${p => p.$alt ? '#fafafa' : '#fff'};border-bottom:1px solid #efefef;`;
const TreeCell = styled.div`width:189px;flex:none;display:flex;align-items:center;padding-left:${p => p.$pad}px;position:relative;min-width:0;border-right:1px solid #efefef;`;
const Latest = styled.div`width:59px;display:flex;align-items:center;padding-left:5px;flex:none;background:${p => p.$sel ? '#8dbbcb' : 'transparent'};`;
const Exp = styled.div`width:12px;height:11px;flex:none;position:relative;
  ${p => p.$k ? `border:1px solid #d4d4d4;background:#fff;
  &::before{content:"";position:absolute;left:1px;right:1px;top:4px;height:1px;background:#111;}` : ''}
  ${p => p.$k === '+' ? `&::after{content:"";position:absolute;top:1px;bottom:1px;left:4.500px;width:1px;background:#111;}` : ''}`;
const ChkSlot = styled.div`width:16px;height:16px;margin-left:${p => p.$ml}px;flex:none;display:flex;align-items:center;justify-content:center;position:relative;`;
const ChkBox = styled.div`width:12px;height:12px;border:1.500px solid #111;background:#fff;position:relative;`;
const TickSvg = styled.svg`position:absolute;left:-1px;top:-1px;`;
const IcSlot = styled.div`width:16px;height:18px;flex:none;margin-left:${p => p.$ml || 0}px;display:flex;align-items:center;justify-content:center;`;
const RowText = styled.div`margin-left:${p => p.$ml}px;font-size:15px;line-height:23px;white-space:nowrap;overflow:hidden;text-overflow:ellipsis;padding:0 2px 0 0;color:${p => p.$c};background:${p => p.$sel ? '#8dbbcb' : 'transparent'};flex:${p => p.$sel ? 1 : '0 1 auto'};min-width:0;align-self:stretch;display:block;`;
const HStub = styled.div`position:absolute;left:${p => p.$x}px;top:11px;width:${p => p.$w}px;border-top:1px dotted #888;`;
const VGuide = styled.div`position:absolute;left:${p => p.$x}px;top:${p => p.$t}px;height:${p => p.$h}px;border-left:1px dotted #888;z-index:1;`;
const HScroll = styled.div`height:20px;background:#f0f0f0;display:flex;align-items:center;flex:none;`;
const HArrow = styled.div`width:18px;height:16px;display:flex;align-items:center;justify-content:center;flex:none;`;
const HArrowEnd = styled.div`flex:1;height:16px;display:flex;align-items:center;justify-content:flex-end;padding-right:27px;`;
const Thumb = styled.div`width:129px;height:19px;background:#c9c9c9;margin-left:3px;flex:none;`;
const Splitter = styled.div`height:5px;margin:1px 9px 0 6px;background:#dcdcdc;border:1px solid #aaa;flex:none;`;
const Section = styled.div`height:28px;margin:0 9px 0 6px;padding:0 8px 0 7px;display:flex;align-items:center;justify-content:space-between;font-size:18px;line-height:24px;color:#1478a0;border-bottom:3px solid #d4d4d4;flex:none;`;
const Gutter = styled.div`width:1px;background:#999;flex:none;`;
const Work = styled.div`flex:1;min-width:0;display:flex;flex-direction:column;`;
const DocStrip = styled.div`height:25px;background:#fff;display:flex;flex:none;`;
const DocTab = styled.div`width:150px;background:#54a0bb;color:#fff;display:flex;align-items:center;padding-left:3px;font-size:15px;line-height:20px;flex:none;`;
const DocName = styled.span`margin-left:5px;margin-right:6px;`;
const Canvas = styled.div`position:relative;flex:1;min-height:0;background:#cccccc;border-top:2px solid #54a0bb;border-left:2px solid #54a0bb;overflow:hidden;`;
const CanvasInner = styled.div`position:absolute;inset:0;border:1px solid #8a8a8a;border-top:0;border-left:1px solid #9a9a9a;`;
const SheetSvg = styled.svg`position:absolute;left:142px;top:118px;`;
const WheelSvg = styled.svg`position:absolute;left:278px;top:309px;`;
const PreviewSvg = styled.svg`position:absolute;left:884px;top:326px;`;
const SheetName = styled.div`position:absolute;left:8px;bottom:3px;font:11px/14px "Liberation Sans",sans-serif;color:#222;`;

/* status */
const Status = styled.div`height:23px;background:#fff;border-top:2px solid #d8d8d8;display:grid;grid-template-columns:1fr 120px 1fr;align-items:center;flex:none;font-size:14px;font-weight:500;padding:0 0 4px 3px;`;
const StatusMid = styled.div`font-weight:700;text-align:left;margin-left:6px;grid-column:2;white-space:nowrap;`;
const StatusRight = styled.div`display:flex;justify-content:flex-end;gap:4px;padding-right:55px;align-items:center;`;
const StatusLeft = styled.div`white-space:nowrap;grid-column:1;`;

/* taskbar */
const Taskbar = styled.div`height:50px;background:linear-gradient(90deg,#233a43 0%,#21353f 30%,#1e3040 60%,#1c2c41 100%);display:flex;align-items:center;flex:none;position:relative;color:#fff;`;
const TaskBtn = styled.div`width:62px;height:50px;flex:none;display:flex;align-items:center;justify-content:center;position:relative;background:${p => p.$on ? '#4f6770' : 'transparent'};
  ${p => p.$run ? `&::after{content:"";position:absolute;left:${p.$on ? 0 : 6}px;right:${p.$on ? 0 : 6}px;bottom:0;height:3px;background:#76b9ed;}` : ''}`;
const Tray = styled.div`margin-left:auto;display:flex;align-items:center;height:50px;`;
const TraySlot = styled.div`width:${p => p.$w}px;display:flex;justify-content:center;align-items:center;flex:none;font-size:${p => p.$fs || 14}px;margin-bottom:${p => p.$mb || 0}px;`;
const Clock = styled.div`width:82px;text-align:center;font-size:15px;line-height:20px;flex:none;`;
const ClockTime = styled.div`font-family:"Noto Sans",sans-serif;`;
const ClockDate = styled.div`font-family:"Noto Sans",sans-serif;font-size:14.500px;color:#e5e9ee;margin-top:4px;white-space:nowrap;`;
const Watermark = styled.div`position:absolute;right:3px;bottom:3px;font:16px/18px "Liberation Serif","Noto Sans CJK SC",serif;letter-spacing:1px;color:#d6dae0;white-space:nowrap;opacity:.8;`;
const TrayEdge = styled.div`position:absolute;right:5px;top:0;bottom:0;width:1px;background:#5b6b7b;`;

/* popups */
const MiniBar = styled.div`position:absolute;left:159px;top:278px;width:200px;height:37px;background:#fff;border:1px solid #c4c4c4;display:flex;align-items:center;padding:1px 0 0 3px;z-index:5;`;
const MiniSlot = styled.div`width:${p => p.$w || 31}px;height:30px;display:flex;align-items:center;justify-content:center;flex:none;`;
const MiniSep = styled.div`width:1px;height:26px;background:#ddd;margin:0 3px;flex:none;`;
const Menu = styled.div`position:absolute;left:160px;top:322px;width:187px;height:520px;background:#fff;border:1px solid #c9c9c9;padding:1px 3px 0 2px;box-shadow:2px 2px 4px rgba(0,0,0,.55);z-index:4;`;
const MItem = styled.div`height:24px;display:flex;align-items:center;font-size:14px;font-weight:${p => p.$b ? 700 : 400};color:#1a1a1a;background:${p => p.$on ? '#afd5e0' : 'transparent'};white-space:nowrap;line-height:20px;`;
const MIcon = styled.div`width:28px;padding-right:3px;display:flex;justify-content:center;flex:none;`;
const MText = styled.span`padding-bottom:2px;`;
const MSep = styled.div`height:9px;position:relative;&::after{content:"";position:absolute;left:10px;right:10px;top:3px;height:1px;background:#d8d8d8;}`;

/* ---------- data ---------- */
const TABS = ['主页', '制图工具', '布局', '分析', '视图', '工具', '应用模块', '装配', '注塑模向导', '级进模向导', '电极设计', '内部', '星空 V7.4'];
const VIEW_G = ['projView', 'sectLine', 'box3', 'gridBlue', 'localV', 'redFilm', 'box3b', null, 'breakV', 'revolve', 'box3c', null];
const DIM_G = ['dimX', 'conicC', 'sumFrame', 'radial', 'curveD', 'chain', 'angleD', 'arcD', null];
const NOTE_G = ['leader', 'balloon', 'xThin', 'tool', 'crossC', 'aStand', 'angleT', 'curveT', 'tool', 'hatchR', 'zoomG', 'imgT', 'sqrtT', 'grayCopy', 'stamp'];
const STD1 = ['grayNodes', 'stackG', 'stackDoc', '|', 'tag'];
const STD2 = ['blueChk', 'toolChk', 'yellowChk', '|', 'cubeBar'];
const DR1 = ['winBox', 'stackT', 'tableBin', 'wrenchV', 'ballots', '|', 'cubeBar', '|', 'csysC', '|', 'frameH', 'boxPin', 'boxC', '|', 'gridDash', 'binoc', 'binoc10', 'dimYel', 'dimXb', 'dimABC'];
const DR2 = ['gridX', 'tri', 'tableTri', 'aArrow', 'half', 'xyz', 'square', 'tableDot', 'doc', 'broom', '|', 'gearsDoc', 'gear', '|', 'hatchSlots'];
const DM1 = ['stepDim', '|', 'xGray', 't105', 't108', 't105g', 't108g', 'xBoxR', 'xParen', 't10h7', 't10h7b', 't10h7c', 't10b'];
const DM2 = ['stepDim2', 'r2Dim', '|', 'diamR', 'diamR', 'returnT'];

const bar = (n, w) => ({ n, w });
const BAR_A = [bar('wrenchGray', 22), bar('boxFilter', 20), bar('^', 14), bar('undoTarget', 26), bar('robot', 22), bar('grayTgt', 30), bar('dashBox', 16), bar('^', 22)];
const BAR_B = [['hSnap', 1], ['hLine1', 1], ['hLine2', 1], ['sLine', 0], ['polyS', 1], ['splineS', 1], ['arcTop', 0], ['targ', 1], ['ringS', 0], ['plusS', 1], ['hLine2', 1], ['surfS', 0]];
const BAR_C = [bar('zoomDash', 24), bar('handPan', 24), bar('gridRed', 26), bar('^', 14), bar('movieA', 24), bar('^', 18)];

const feat = (t, icon, gray) => ({ lvl: 1, chk: 'box', icon, t, gray, v: true });
const TREE = [
  { lvl: 0, exp: '-', chk: 'tick', icon: 'sheetT', t: '图纸' },
  { lvl: 1, exp: '-', chk: 'tick', icon: 'sheetS', t: '工作表', c: '#ee3a3a' },
  { lvl: 2, chk: 'tick', icon: 'viewT', t: '图纸视图 "工作视图"', sel: true, v: true },
  { lvl: 2, chk: 'tick', icon: 'viewT', t: '导入的视图' },
  { lvl: 1, chk: 'q', icon: 'folder', t: '过时', stub: true },
  { lvl: 0, exp: '+', icon: 'folder', t: '组', plain: true },
  { lvl: 0, exp: '+', icon: 'folderR', t: '测量', plain: true },
  { lvl: 0, exp: '-', icon: 'folder', t: '模型历史记录', plain: true },
  feat('基准坐标系 (0)', 'csysT', true), feat('草图 (1) "SKE...', 'skT', true), feat('拉伸 (2)', 'extT'), feat('草图 (3)', 'skT', true), feat('草图 (4)', 'skT', true),
  feat('直纹 (5)', 'ruledT'), feat('草图 (6)', 'skT', true), feat('拉伸 (7)', 'extT'), { ...feat('阵列特征 (8)', 'patT'), exp: '+' }, feat('草图 (9)', 'skT', true), feat('拉伸 (10)', 'extT'),
  feat('合并 (11)', 'uniT'), feat('合并 (12)', 'uniT'), feat('合并 (13)', 'uniT'), feat('草图 (14)', 'skT', true), feat('拉伸 (15)', 'extT'), feat('减去 (16)', 'subT'), feat('草图 (17) "SKE...', 'skT', true),
];
const PADS = [4, 23, 42];
const GUIDES = [{ x: 10, t: 18, h: 158 }, { x: 29, t: 34, h: 76 }, { x: 48, t: 60, h: 24 }, { x: 29, t: 190, h: 438 }];
const RAIL = [['cog', 0, 26, 20, 20], ['railAsm', 22, 30, 28, 30], ['railPart', 4, 45, 28, 30, true], ['railLib', 5, 30, 26, 28], ['railEye', 11, 30, 26, 28], ['railLayer', 13, 30, 26, 28], ['railInfo', 25, 30, 28, 30], ['railWeb', 23, 30, 26, 28], ['railClock', 24, 30, 24, 30], ['railTools', 11, 30, 26, 28]];
const MENU = [
  ['miniAA', '设置(_S)...', 'b', 18], ['miniWr', '编辑(_E)...', '', 18], ['projView', '添加投影视图(_J)...'], ['localV', '添加局部放大图(_D)...'], ['sectLine', '添加剖切线(_S)...'], ['breakV', '添加断开视图(_K)...'],
  ['alignV', '视图对齐(_L)...'], ['update', '更新(_U)', '', 17, 30], ['boundary', '边界(_B)...'], ['editAssoc', '视图相关编辑(_V)...'], ['copy3d', '复制到 _3D...'], ['expl', '打散视图(_S)...'], '-',
  ['miniAct', '活动草图视图', '', 17, 25], '-', ['newComp', '新建 2D 组件'], '-', ['miniCut', '剪切(_T)'], ['copy', '复制(_C)'], ['menuX', '删除(_D)'], [null, '重命名'], [null, '展开', 'on'], '-', ['props', '属性(_I)'],
];
const Label = ({ t }) => { const i = t.indexOf('_'); if (i < 0) return t; return <>{t.slice(0, i)}<u>{t[i + 1]}</u>{t.slice(i + 2)}</>; };

const IconLine = ({ list }) => <IconRow>{list.map((n, i) => n === '|' ? <VSep key={i} /> : <Slot23 key={i}><Ico n={n} s={19} /></Slot23>)}</IconRow>;
const BarItems = ({ list }) => list.map((b, i) => <BarSlot key={i} $w={b.w}><div>{b.n === '^' ? <Tri /> : <Ico n={b.n} />}</div></BarSlot>);
const Chev = ({ d }) => <svg width="14" height="14" viewBox="0 0 14 14" fill="none" style={{ display: 'block' }}><path d={d} stroke="#666" strokeWidth="1.600" /></svg>;
const BlueChev = () => <svg width="14" height="12" viewBox="0 0 14 12" fill="none" style={{ display: 'block' }}><path d="M1.500 2l5.500 8 5.500-8" stroke="#0f6a8c" strokeWidth="2.600" /></svg>;
const MoreMark = () => <svg width="9" height="8" viewBox="0 0 9 8" style={{ display: 'block' }}><path d="M0 0h9v1.500H0zM0 3h9L4.500 8z" fill="#111" /></svg>;

const Wheel = () => (
  <WheelSvg width="350" height="350" viewBox="0 0 1050 1050" fill="none">
    <circle cx="520" cy="521" r="459" stroke="#111" strokeWidth="4.500" />
    <g stroke="#111" strokeWidth="4.800" strokeLinejoin="round">
      <path d="M397 80C375 150 390 240 458 315L478 392C478 415 448 437 425 437L337 405C250 395 175 345 135 272M120 300C160 370 240 420 330 425L395 455C412 470 415 510 400 525C385 545 350 555 310 568C230 630 140 645 72 618M80 645C150 670 250 650 315 588L385 563C400 560 420 575 432 600C440 630 425 660 403 705C405 800 350 860 272 905M298 917C370 880 425 810 420 712L455 640C470 628 510 630 530 650L570 732C610 770 650 830 618 968M645 962C662 880 650 810 585 725L560 650C560 630 590 600 620 608L740 663C820 690 860 730 888 792M905 768C860 690 830 665 750 645L650 590C625 570 625 530 650 505C665 495 720 480 772 447C830 405 900 395 970 425M975 452C900 425 840 425 778 467L650 480C630 480 605 450 605 425L635 335C645 240 690 180 770 140M745 125C665 165 620 230 620 330L590 395C570 420 530 415 510 395L473 310C420 230 408 150 425 75" />
      <path d="M458 315L475 308M330 425L337 405M305 568L315 588M403 705L420 712M570 732L585 725M740 663L750 645M772 447L778 467M620 330L640 335" />
    </g>
    <g stroke="#333" strokeWidth="2">
      <path d="M318 110C315 230 380 350 478 405M665 90C570 170 530 290 570 410M920 320C820 315 700 360 640 478M950 665C880 590 760 545 638 568M722 930C730 810 670 700 570 640M372 952C450 880 510 750 470 635M110 722C230 730 360 670 400 565M88 375C160 450 290 510 405 470" />
    </g>
    <circle cx="520" cy="522" r="64" stroke="#111" strokeWidth="4.800" />
    <circle cx="520" cy="522" r="54" stroke="#111" strokeWidth="4.800" />
    <path d="M433 521H608M521 435V608" stroke="#7d7d7d" strokeWidth="3" strokeDasharray="26 7 10 7" />
  </WheelSvg>
);

export default function App() {
  return (
    <Root>
      <Global />
      <svg width="0" height="0" style={{ position: 'absolute' }}><defs><linearGradient id="winG" x1="0" y1="0" x2="0.4" y2="1"><stop offset="0" stopColor="#fff" /><stop offset="1" stopColor="#a6c4ef" /></linearGradient></defs></svg>

      <TitleBar>
        <Logo>NX</Logo>
        <QSep />
        <QSlot $w={25}><Ico n="save" s={18} /></QSlot>
        <QSep />
        <QSlot $w={26}><Ico n="undo" s={18} /></QSlot><QSlot $w={12}><Tri /></QSlot><QSlot $w={26}><Ico n="redo" s={17} /></QSlot>
        <QSep />
        <QSlot $w={29}><Ico n="cut" s={18} /></QSlot><QSlot $w={23}><Ico n="copy" s={18} /></QSlot><QSlot $w={24}><Ico n="paste" s={18} /></QSlot><QSlot $w={24}><Ico n="snap" s={18} /></QSlot>
        <QSep />
        <QSlot $w={28}><Ico n="star" s={18} /></QSlot><QSlot $w={16}><Tri /></QSlot>
        <QSep />
        <QSlot $w={28}><Ico n="brush" s={18} /></QSlot>
        <QSep />
        <QSlot $w={27}><Ico n="switchWin" s={18} /></QSlot><QLabel>切换窗口</QLabel>
        <QSlot $w={27}><Ico n="winIcon" s={18} /></QSlot><QLabel>窗口</QLabel>
        <QSlot $w={16}><Tri /></QSlot>
        <QSlot $w={12}><MoreMark /></QSlot>
        <Title>NX 12.0.2.9 - 制图</Title>
        <TitleRight>
          <Siemens>SIEMENS</Siemens>
          <WinBtn><svg width="10" height="4" style={{ display: 'block', marginTop: 8 }}><rect width="8" height="2" y="1" x="1" fill="#444" /></svg></WinBtn>
          <WinBtn><svg width="12" height="12" fill="none" style={{ display: 'block' }}><path d="M3 3V1h8v7H9M1 3.500h8v7H1z" stroke="#333" /><path d="M1 3.500h8" stroke="#333" strokeWidth="2" /></svg></WinBtn>
          <WinBtn><svg width="13" height="13" fill="none" style={{ display: 'block' }}><path d="M1 1l11 11M12 1L1 12" stroke="#333" strokeWidth="1.300" /></svg></WinBtn>
          <QSlot $w={2} />
        </TitleRight>
      </TitleBar>

      <TabBar>
        <FileTab>文件(F)</FileTab>
        {TABS.map((t, i) => <Tab key={t} $on={i === 0}>{t}</Tab>)}
        <TabRight>
          <Search>查找命令<Ico n="searchG" s={17} /></Search>
          <QSlot $w={25}><Ico n="fitIcon" s={17} /></QSlot>
          <QSlot $w={28}><Ico n="chevUp" s={15} /></QSlot>
          <QSlot $w={25}><Ico n="help" s={16} /></QSlot>
          <QSlot $w={26}><Ico n="hat" s={17} /></QSlot>
          <TutLabel>教程</TutLabel>
        </TabRight>
      </TabBar>

      <Ribbon>
        <Group $w={87}>
          <Body><Big $w={87} $ml={1}><BigIcon><Ico n="newSheet" s={30} v={30} /></BigIcon><BigText>新建图纸页</BigText><BigDD><Tri /></BigDD></Big></Body>
        </Group>
        <Group $w={301}>
          <Body>
            <Stack>
              <WizRow><Ico n="wizard" s={23} v={23} />视图创建向导</WizRow>
              <WizRow><Ico n="baseView" s={23} v={25} />基本视图</WizRow>
            </Stack>
            <Grid3 $c={4}>{VIEW_G.map((n, i) => <Cell key={i}>{n && <Ico n={n} />}</Cell>)}</Grid3>
            <Big $w={66}><BigIcon><Ico n="update" s={30} v={30} /></BigIcon><BigText>更新视图</BigText><BigDD><Tri /></BigDD></Big>
          </Body>
          <LabelRow $shift={23}><GroupLabel>视图</GroupLabel><LabelDD $mr={-13}><Tri /></LabelDD></LabelRow>
        </Group>
        <Group $w={129}>
          <Body $pl={4}>
            <Big $w={46}><BigIcon><Ico n="quick" s={30} v={30} /></BigIcon><BigText>快速</BigText></Big>
            <Grid3 $c={3}>{DIM_G.map((n, i) => <Cell key={i}>{n && <Ico n={n} />}</Cell>)}</Grid3>
          </Body>
          <LabelRow $shift={20}><GroupLabel>尺寸</GroupLabel><LabelDD $mr={-11}><Tri /></LabelDD></LabelRow>
        </Group>
        <Group $w={196}>
          <Body $pl={5}>
            <Big $w={45}><BigIcon><Ico n="bigA" s={30} v={30} /></BigIcon><BigText>注释</BigText></Big>
            <Grid3 $c={5}>{NOTE_G.map((n, i) => <Cell key={i}><Ico n={n} /></Cell>)}</Grid3>
            <DDCell><Tri /></DDCell>
          </Body>
          <LabelRow $shift={22}><GroupLabel>注释</GroupLabel><LabelDD $mr={-12}><Tri /></LabelDD></LabelRow>
        </Group>
        <Group $w={197}>
          <Body>
            <SketchCol>
              <Combo $w={120} $pr={9}>A3_1<Tri $s={5} /></Combo>
              <BigText $mt={9}>草图视图</BigText>
            </SketchCol>
            <SketchBox><Ico n="sketchSpline" /><Ico n="rectS" /><Ico n="lineS" /></SketchBox>
            <SideArrows><UpTri $c="#ccc" /><Tri /><MoreMark /></SideArrows>
          </Body>
          <LabelRow $shift={23}><GroupLabel>草图</GroupLabel><LabelDD $mr={-14}><Tri /></LabelDD></LabelRow>
        </Group>
        <Group $w={39}>
          <Body><Col3><Ico n="tableNew" /><Ico n="tableN2" /><Ico n="wrenchQ" /></Col3></Body>
          <LabelRow $shift={18}><GroupLabel>表</GroupLabel><LabelDD $mr={-12}><Tri /></LabelDD></LabelRow>
        </Group>
        <Group $w={73}>
          <Body><Big $w={73}><BigIcon><Ico n="aaBig" s={32} v={32} /></BigIcon><BigText $mt={6}>编辑设置</BigText></Big></Body>
        </Group>
        <Group $w={105}>
          <Body><TwoRows><IconLine list={STD1} /><IconLine list={STD2} /></TwoRows></Body>
          <LabelRow $shift={14}><GroupLabel>标准化工具...</GroupLabel><LabelDD $mr={-4}><Tri /></LabelDD></LabelRow>
        </Group>
        <Group $w={397}>
          <Body><TwoRows><IconLine list={DR1} /><IconLine list={DR2} /></TwoRows></Body>
          <LabelRow $shift={26}><GroupLabel>制图工具 - GC工具箱</GroupLabel><LabelDD $mr={-16}><Tri /></LabelDD></LabelRow>
        </Group>
        <Group $w={289}>
          <Body><TwoRows><IconLine list={DM1} /><IconLine list={DM2} /></TwoRows></Body>
          <LabelRow $shift={24}><GroupLabel>尺寸快速格式化工具 - GC工具箱</GroupLabel><LabelDD $mr={-15}><Tri /></LabelDD></LabelRow>
        </Group>
        <Group $w={40}>
          <Body><RightCol><Ico n="circleLine" s={25} v={24} /><Ico n="chainLink" s={28} v={27} /></RightCol></Body>
        </Group>
        <Group $w={67} $nosep>
          <Body />
          <LabelRow><GroupLabel /><LabelDD $mr={7}><Tri /></LabelDD></LabelRow>
        </Group>
      </Ribbon>

      <SelBar>
        <Ico n="menuIc" s={18} />
        <SelLabel>菜单(<u>M</u>)</SelLabel>
        <Tri />
        <BarSep $ml={6} $mr={13} />
        <Combo $w={167} $pr={4}>无选择过滤器<Tri $s={5} /></Combo>
        <Combo $w={176} $pr={6} $ml={7}>整个装配<Tri $s={5} /></Combo>
        <QSlot $w={9} />
        <BarItems list={BAR_A} />
        {BAR_B.map(([n, hl], i) => <BarSlot key={i} $w={25} $hl={!!hl}><div><Ico n={n} s={19} /></div></BarSlot>)}
        <BarSep $ml={5} $mr={8} />
        <BarItems list={BAR_C} />
        <BarSep />
        <BarEnd><Tri /></BarEnd>
      </SelBar>

      <Main>
        <Rail>
          {RAIL.map(([n, mt, h, s, v, on]) => <RailItem key={n} $mt={mt} $h={h} $on={on}><Ico n={n} s={s} v={v} /></RailItem>)}
        </Rail>
        <Panel>
          <PanelHead>部件导航器<MaxBox /></PanelHead>
          <TreeBox>
            <TreeHead>
              <HeadCell $w={190} $pl={7} $line>名称<UpTri $c="#222" /></HeadCell>
              <HeadCell $w={58} $pl={6}>最新</HeadCell>
            </TreeHead>
            <TreeMid>
              <Rows>
                {GUIDES.map((g, i) => <VGuide key={i} $x={g.x} $t={g.t} $h={g.h} />)}
                {TREE.map((r, i) => (
                  <Row key={i} $alt={i % 2 === 1}>
                    <TreeCell $pad={PADS[r.lvl]}>
                      {!r.exp && r.chk && <HStub $x={PADS[r.lvl] + 6} $w={10} />}
                      <Exp $k={r.exp} />
                      {r.chk ? (
                        <ChkSlot $ml={3}>
                          {r.chk === 'box' && <ChkBox><TickSvg width="12" height="12" viewBox="0 0 16 16"><Tick /></TickSvg></ChkBox>}
                          {r.chk === 'tick' && <Ico n="tick" s={16} v={16} />}
                          {r.chk === 'q' && <Ico n="question" s={18} />}
                        </ChkSlot>
                      ) : null}
                      <IcSlot $ml={r.plain ? 2 : 0}><Ico n={r.icon} s={r.icon === 'viewT' ? 18 : 17} /></IcSlot>
                      <RowText $ml={r.plain ? 4 : 3} $c={r.gray ? '#9a9a9a' : (r.c || '#1a1a1a')} $sel={r.sel}>{r.t}</RowText>
                    </TreeCell>
                    <Latest $sel={r.sel}>{r.v && <Ico n="tick" s={16} v={16} />}</Latest>
                  </Row>
                ))}
              </Rows>
              <VScroll><Chev d="M2 9l5-5 5 5" /><Chev d="M2 5l5 5 5-5" /></VScroll>
            </TreeMid>
            <HScroll>
              <HArrow><Chev d="M9 2L4 7l5 5" /></HArrow>
              <Thumb />
              <HArrowEnd><Chev d="M5 2l5 5-5 5" /></HArrowEnd>
            </HScroll>
          </TreeBox>
          <Splitter />
          <Section>相关性<BlueChev /></Section>
          <Section>细节<BlueChev /></Section>
          <Section>预览<BlueChev /></Section>
        </Panel>
        <Gutter />
        <Work>
          <DocStrip>
            <DocTab>
              <svg width="18" height="16" viewBox="0 0 18 16" style={{ display: 'block' }}><path d="M1 10l8-9 8 9-7 3z" fill="#e8f2fa" stroke="#1a3a7a" /><path d="M2 11l9 4 6-2-8-3z" fill="#e6cf62" /></svg>
              <DocName>四轴叶轮.prt</DocName>
              <svg width="11" height="12" viewBox="0 0 11 12" fill="none" style={{ display: 'block' }}><path d="M1 1h6l3 3v7H1zM4 6l5-4" stroke="#fff" strokeWidth="1.500" /></svg>
              <svg width="10" height="10" viewBox="0 0 10 10" fill="none" style={{ display: 'block', marginLeft: 6 }}><path d="M1 1l8 8M9 1L1 9" stroke="#fff" strokeWidth="2" /></svg>
            </DocTab>
          </DocStrip>
          <Canvas>
            <CanvasInner>
              <SheetSvg width="1074" height="700" fill="none"><path d="M1 700V1H1072V700" stroke="#858585" strokeWidth="1.500" strokeDasharray="9 5" /></SheetSvg>
              <Wheel />
              <PreviewSvg width="86" height="60" viewBox="0 0 86 60" fill="none">
                <rect x=".5" y=".5" width="85" height="59" stroke="#f0a04a" />
                <circle cx="18" cy="16" r="15.500" stroke="#111" strokeWidth="1.300" />
                <path d="M18 15H73L52 36H18z" stroke="#111" strokeWidth="1.300" />
              </PreviewSvg>
              <SheetName>"A3_1"</SheetName>
            </CanvasInner>
          </Canvas>
        </Work>
      </Main>

      <Status>
        <StatusLeft>选择对象并使用 MB3，或双击，或按住并拖动来移动视图、尺寸或注释</StatusLeft>
        <StatusMid>全部 1</StatusMid>
        <StatusRight><Ico n="flagTile" s={16} /><Ico n="fitIcon" s={16} /></StatusRight>
      </Status>

      <Taskbar>
        <TaskBtn><svg width="20" height="20" viewBox="0 0 20 20" style={{ display: 'block' }}><path d="M0 3l8.500-1.200V9.500H0zM9.500 1.600L20 0v9.500H9.500zM0 10.500h8.500v7.700L0 17zM9.500 10.500H20V20L9.500 18.400z" fill="#fff" /></svg></TaskBtn>
        <TaskBtn $run><svg width="28" height="26" viewBox="0 0 28 26" style={{ display: 'block' }}><path d="M1 3h10l2 3h14v19H1z" fill="#e3ad3d" /><path d="M1 8h26v17H1z" fill="#f8d775" /><rect x="8" y="15" width="12" height="10" fill="#3b8fd9" /><rect x="11" y="19" width="6" height="6" fill="#f8d775" /></svg></TaskBtn>
        <TaskBtn $run><svg width="30" height="30" viewBox="0 0 30 30" style={{ display: 'block' }}><defs><linearGradient id="eg" x1="0" y1="0" x2="1" y2="1"><stop offset="0" stopColor="#3bd08a" /><stop offset="1" stopColor="#1466b8" /></linearGradient></defs><circle cx="15" cy="15" r="15" fill="url(#eg)" /><path d="M3 17C4 8 14 5 22 10c4 3 4 8 0 9-4 0-4-3-8-4-5-1-6 6-2 10 3 3 8 4 12 3-8 4-22-1-21-11z" fill="#0b3e7e" /></svg></TaskBtn>
        <TaskBtn><svg width="30" height="30" viewBox="0 0 30 30" style={{ display: 'block' }}><rect width="30" height="30" rx="6" fill="#1b8bf2" /><circle cx="15" cy="15" r="10.500" stroke="#fff" strokeWidth="2" fill="none" /><path d="M11 8v14h2.500v-6l5 6h3l-6-7.300L21 8h-3l-4.500 5.500V8z" fill="#fff" /></svg></TaskBtn>
        <TaskBtn $run><svg width="32" height="36" viewBox="0 0 32 36" style={{ display: 'block' }}><rect x="1" y="2" width="24" height="26" fill="#1b86e0" /><rect x="3" y="5" width="4" height="4" fill="#fff" /><rect x="3" y="12" width="4" height="4" fill="#fff" /><rect x="3" y="19" width="4" height="4" fill="#fff" /><path d="M10 2h9l6 7h-15z" fill="#fff" /><path d="M19 2h6v8z" fill="#f2b33a" /><rect x="12" y="15" width="19" height="20" rx="2" fill="#ef5a64" /><rect x="17" y="20" width="3" height="11" fill="#fff" /><rect x="23" y="20" width="3" height="11" fill="#fff" /></svg></TaskBtn>
        <TaskBtn $run $on><svg width="30" height="34" viewBox="0 0 30 34" style={{ display: 'block' }}><circle cx="14" cy="18" r="11" fill="#1a78d0" /><path d="M6 13c3-4 10-5 14 0l-6 14c-4-2-8-6-8-14z" fill="#2fb05a" /><path d="M4 0l12 3-5 14z" fill="#d5203a" /><path d="M2 30C12 32 30 18 27 10c4 10-12 24-25 20z" fill="#f0a020" /></svg></TaskBtn>
        <TaskBtn $run><svg width="34" height="32" viewBox="0 0 34 32" style={{ display: 'block' }}><ellipse cx="13" cy="12" rx="13" ry="11" fill="#2fc45a" /><path d="M5 19l-1 6 6-3z" fill="#2fc45a" /><circle cx="9" cy="9" r="1.500" fill="#17702f" /><circle cx="17" cy="9" r="1.500" fill="#17702f" /><ellipse cx="23" cy="20" rx="11" ry="9" fill="#e6e6e6" /><path d="M28 27l2 4-6-2z" fill="#e6e6e6" /><circle cx="19" cy="19" r="1.300" fill="#888" /><circle cx="27" cy="19" r="1.300" fill="#888" /></svg></TaskBtn>
        <Tray>
          <TraySlot $w={42}><svg width="16" height="9" viewBox="0 0 16 9" fill="none" style={{ display: 'block' }}><path d="M1 8l7-7 7 7" stroke="#fff" strokeWidth="1.200" /></svg></TraySlot>
          <TraySlot $w={38}><svg width="20" height="24" viewBox="0 0 20 24" style={{ display: 'block' }}><ellipse cx="10" cy="12" rx="10" ry="12" fill="#e9c61e" /><path d="M0 12c3 5 7 3 10 0s7-5 10 0c0 7-5 12-10 12S0 19 0 12z" fill="#1f9a4a" /><path d="M9 7h2v4h4v2h-4v4H9v-4H5v-2h4z" fill="#0e8a3a" /></svg></TraySlot>
          <TraySlot $w={42}><svg width="20" height="16" viewBox="0 0 20 16" fill="none" style={{ display: 'block' }}><rect x="4.500" y="3.500" width="15" height="11" stroke="#fff" /><rect x="6" y="5" width="13" height="9" fill="#fff" /><path d="M2 1v5M0 6h4v3H0z" stroke="#fff" /></svg></TraySlot>
          <TraySlot $w={41}><svg width="16" height="16" viewBox="0 0 16 16" fill="none" style={{ display: 'block' }}><path d="M1 14c0-6 4-12 13-13M5 15c0-5 3-8 9-9M9 15c0-3 1-5 5-5" stroke="#d8dde3" /><circle cx="13" cy="14" r="1.300" fill="#fff" /></svg></TraySlot>
          <TraySlot $w={36}><svg width="20" height="18" viewBox="0 0 20 18" fill="none" style={{ display: 'block' }}><path d="M1 6h3l5-4v14l-5-4H1z" stroke="#fff" /><path d="M12 5c1 3 1 5 0 8M15 3c2 4 2 8 0 12" stroke="#aeb6c0" /></svg></TraySlot>
          <TraySlot $w={34} $fs={20}>英</TraySlot>
          <Clock><ClockTime>22:06</ClockTime><ClockDate>2023/5/16</ClockDate></Clock>
          <TraySlot $w={65} $mb={4}><svg width="20" height="20" viewBox="0 0 20 20" style={{ display: 'block' }}><path d="M0 0h20v18H0z" fill="#fff" /><path d="M4 5h12M4 9h12M4 13h8" stroke="#1a2a3a" strokeWidth="1.300" /></svg></TraySlot>
          <TraySlot $w={7} />
        </Tray>
        <TrayEdge />
        <Watermark>UG爱好者：胡 先森8868</Watermark>
      </Taskbar>

      <MiniBar>
        <MiniSlot><Ico n="miniAA" s={26} v={26} /></MiniSlot>
        <MiniSlot><Ico n="miniWr" s={26} v={26} /></MiniSlot>
        <MiniSlot><Ico n="miniUp" s={26} v={26} /></MiniSlot>
        <MiniSlot><Ico n="miniAct" s={25} v={25} /></MiniSlot>
        <MiniSlot><Ico n="miniX" s={24} v={24} /></MiniSlot>
        <MiniSep />
        <MiniSlot $w={28}><Ico n="miniInfo" s={25} v={25} /></MiniSlot>
      </MiniBar>
      <Menu>
        {MENU.map((m, i) => m === '-' ? <MSep key={i} /> : (
          <MItem key={i} $b={m[2] === 'b'} $on={m[2] === 'on'}>
            <MIcon>{m[0] && <Ico n={m[0]} s={m[3] || 17} v={m[4] || (m[3] === 18 ? 26 : 20)} />}</MIcon>
            <MText><Label t={m[1]} /></MText>
          </MItem>
        ))}
      </Menu>
    </Root>
  );
}
